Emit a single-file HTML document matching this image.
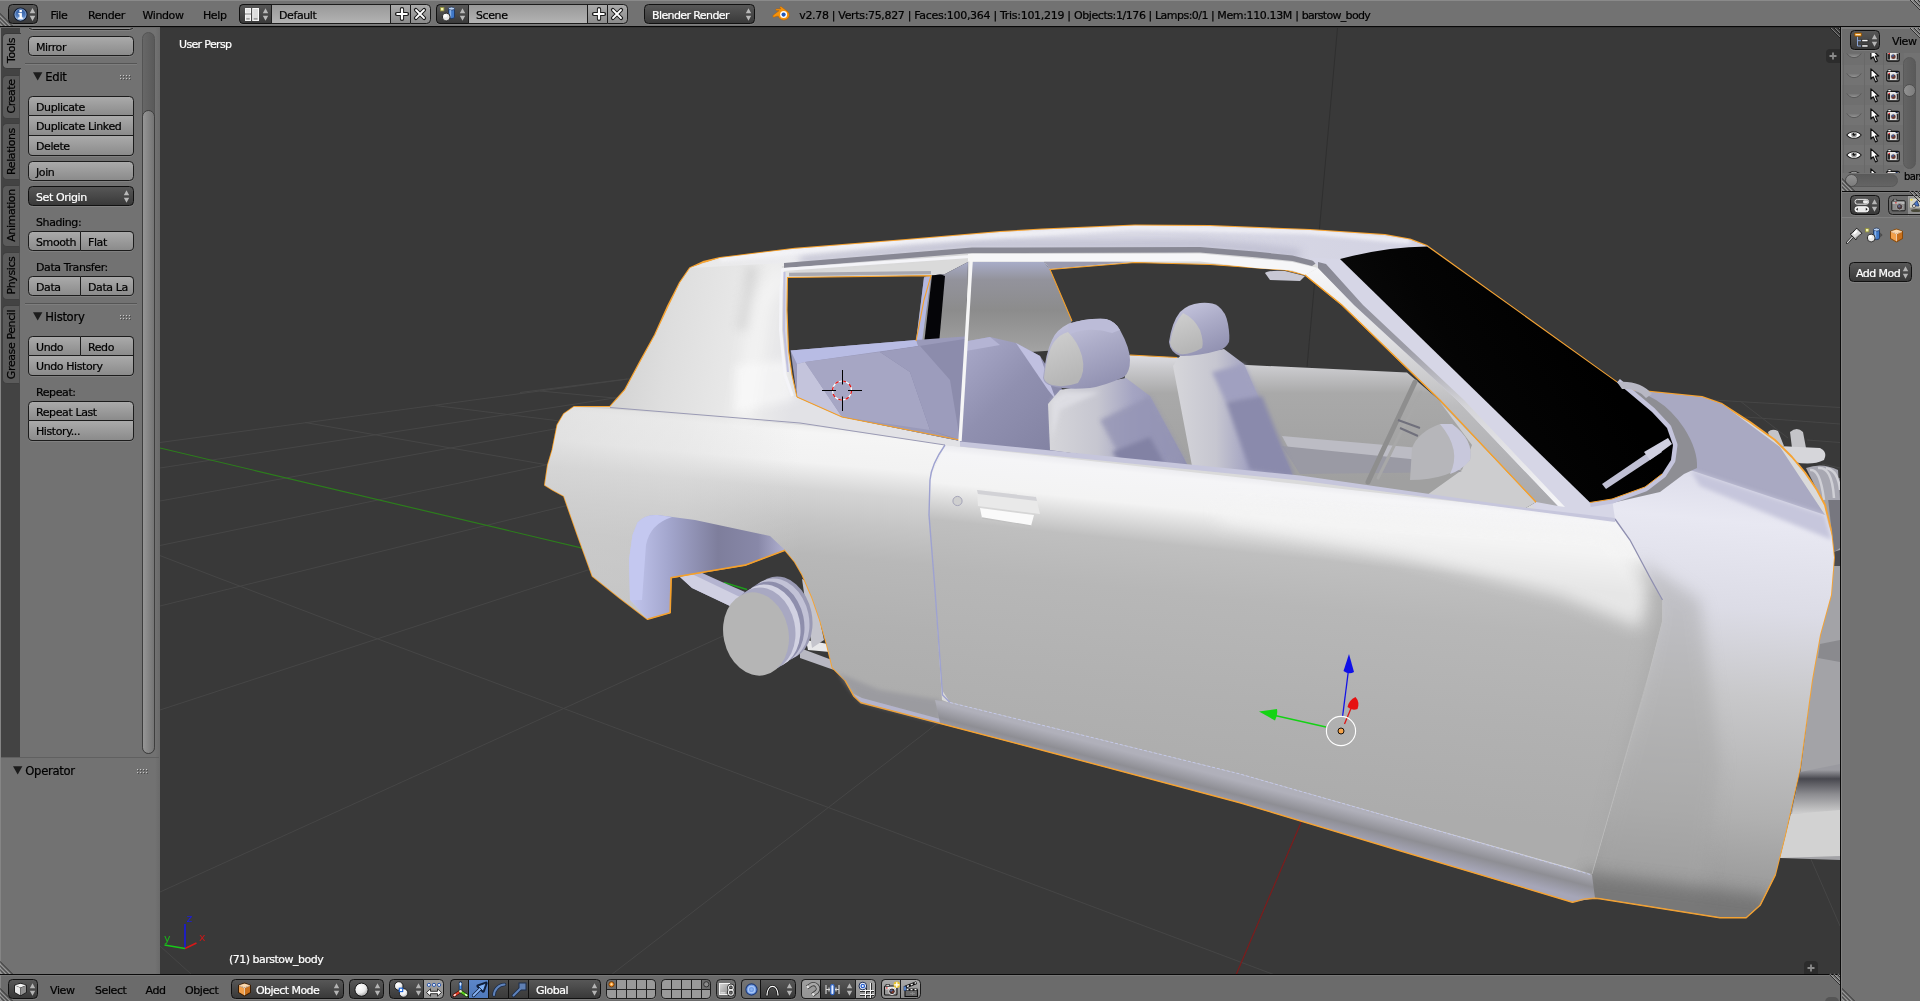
<!DOCTYPE html>
<html lang="en">
<head>
<meta charset="utf-8">
<title>Blender</title>
<style>
html,body{margin:0;padding:0}
body{width:1920px;height:1001px;overflow:hidden;position:relative;background:#727272;font-family:"DejaVu Sans","Liberation Sans",sans-serif;font-size:11px;letter-spacing:-0.4px;color:#000;line-height:13px;-webkit-text-stroke:0.22px currentColor}
#topbar,#left,#view,#bottom,#right{opacity:.999}
div,span,svg{position:absolute;box-sizing:border-box;white-space:nowrap}
svg{overflow:visible}
/* generic widgets */
.tool{border:1px solid #1c1c1c;border-radius:4.5px;background:linear-gradient(#aaaaaa,#8b8b8b);box-shadow:0 1px 0 rgba(255,255,255,.10);padding-left:7px;line-height:21px;height:20px;overflow:hidden}
.tool.top{border-radius:4.5px 4.5px 0 0;box-shadow:none}
.tool.mid{border-radius:0;border-top:none;box-shadow:none;line-height:22px;height:20px}
.tool.bot{border-radius:0 0 4.5px 4.5px;border-top:none;line-height:22px}
.tool.l{border-radius:4.5px 0 0 4.5px}
.tool.r{border-radius:0 4.5px 4.5px 0;border-left:none}
.menu{border:1px solid #111;border-radius:4.5px;background:linear-gradient(#575757,#393939);box-shadow:0 1px 0 rgba(255,255,255,.10);color:#fff;padding-left:7px;line-height:21px;height:20px}
.field{border:1px solid #1c1c1c;background:linear-gradient(#999999,#b3b3b3);line-height:21px;height:20px;padding-left:7px}
.lbl{line-height:13px}
.hline{background:#000}
.hdr-txt{line-height:13px}
</style>
</head>
<body>
<!-- ===== TOP INFO HEADER ===== -->
<div id="topbar" style="left:0;top:0;width:1920px;height:26px;background:#727272">
<!--TOPBAR-->
<div style="left:0;top:0;width:1920px;height:1px;background:#8a8a8a"></div>
<svg style="left:0;top:13px" width="13" height="13" viewBox="0 0 13 13"><g stroke="#3c3c3c" stroke-width="1"><path d="M-1 3.5 L10 14.5 M-1 7.5 L6 14.5 M-1 -0.5 L14 14.5" stroke="#2e2e2e"/></g><g stroke="#a8a8a8" stroke-width="1"><path d="M-1 2.3 L11 14.3 M-1 6.3 L7 14.3 M-1 10.3 L3 14.3"/></g></svg>
<svg style="left:1907px;top:0" width="13" height="13" viewBox="0 0 13 13"><g stroke="#2e2e2e" stroke-width="1"><path d="M2 -1 L14 11 M6 -1 L14 7 M10 -1 L14 3"/></g><g stroke="#a8a8a8" stroke-width="1"><path d="M3.2 -1 L14 9.8 M7.2 -1 L14 5.8 M11.2 -1 L14 1.8"/></g></svg>
<div class="menu" style="left:8px;top:4px;width:30px;padding:0"><svg style="left:4px;top:2px" width="15" height="15" viewBox="0 0 15 15"><defs><linearGradient id="ig" x1="0" y1="0" x2="0" y2="1"><stop offset="0" stop-color="#2c559a"/><stop offset=".55" stop-color="#4b78bb"/><stop offset="1" stop-color="#9dbbe4"/></linearGradient></defs><circle cx="7.5" cy="7.5" r="6.5" fill="url(#ig)" stroke="#0e1a30" stroke-width="1.1"/><circle cx="7.5" cy="7.5" r="5.6" fill="none" stroke="#c4d6f0" stroke-width=".6" opacity=".8"/><rect x="6.5" y="6.1" width="2.4" height="5.3" fill="#fff"/><rect x="5.3" y="6.1" width="2" height="1.2" fill="#fff"/><rect x="5.1" y="10.5" width="5.1" height="1.3" fill="#fff"/><rect x="6.4" y="2.9" width="2.5" height="2.3" fill="#fff"/></svg><svg style="left:20px;top:2px" width="7" height="15" viewBox="0 0 7 15"><path d="M3.5 1 L6.3 6.3 L0.7 6.3 Z M3.5 14 L6.3 8.7 L0.7 8.7 Z" fill="#b9b9b9"/></svg></div>
<span class="hdr-txt" style="left:50.5px;top:9px">File</span>
<span class="hdr-txt" style="left:88px;top:9px">Render</span>
<span class="hdr-txt" style="left:142.5px;top:9px">Window</span>
<span class="hdr-txt" style="left:203px;top:9px">Help</span>
<div class="menu" style="left:239px;top:4px;width:32px;padding:0;border-radius:4.5px 0 0 4.5px;border-right:none"><svg style="left:5px;top:3px" width="14" height="13" viewBox="0 0 14 13"><rect x="0.5" y="0.5" width="5" height="4.6" fill="#e6e6e6" stroke="#f8f8f8" stroke-width="1"/><rect x="0.5" y="6.9" width="5" height="5.6" fill="#e6e6e6" stroke="#f8f8f8" stroke-width="1"/><rect x="7.7" y="0.5" width="5.8" height="12" fill="#dcdcdc" stroke="#f8f8f8" stroke-width="1"/><rect x="1.3" y="10.4" width="3.4" height="1" fill="#777"/><rect x="8.7" y="10.4" width="3.8" height="1" fill="#777"/></svg><svg style="left:22px;top:2px" width="7" height="15" viewBox="0 0 7 15"><path d="M3.5 1.3 L6.2 6.2 L0.8 6.2 Z M3.5 13.7 L6.2 8.8 L0.8 8.8 Z" fill="#b9b9b9"/></svg></div><div class="field" style="left:271px;top:4px;width:119px;border-left:1px solid #1c1c1c;border-right:none;box-shadow:0 1px 0 rgba(255,255,255,.10)">Default</div><div class="tool" style="left:390px;top:4px;width:20px;border-radius:0;border-right:none;padding:0"><svg style="left:3.5px;top:2px" width="14" height="14" viewBox="0 0 14 14"><path d="M7 2 V12 M2 7 H12" stroke="#1a1a1a" stroke-width="4.2" stroke-linecap="round"/><path d="M7 2.3 V11.7 M2.3 7 H11.7" stroke="#fff" stroke-width="2.2" stroke-linecap="round"/></svg></div><div class="tool" style="left:410px;top:4px;width:21px;border-radius:0 4.5px 4.5px 0;padding:0"><svg style="left:2px;top:2px" width="14" height="14" viewBox="0 0 14 14"><path d="M2.8 2.8 L11.2 11.2 M11.2 2.8 L2.8 11.2" stroke="#1a1a1a" stroke-width="3.8" stroke-linecap="round"/><path d="M3 3 L11 11 M11 3 L3 11" stroke="#fff" stroke-width="1.8" stroke-linecap="round"/></svg></div>
<div class="menu" style="left:436px;top:4px;width:32px;padding:0;border-radius:4.5px 0 0 4.5px;border-right:none"><svg style="left:3px;top:1px" width="17" height="16" viewBox="0 0 17 16"><rect x="0.5" y="1.5" width="3.4" height="3.4" fill="#f5f5a8" stroke="#8f8f3a" stroke-width=".8"/><path d="M8.5 2.5 L8.5 11 A3 1.6 0 0 0 14.5 11 L14.5 2.5 Z" fill="#3f78c8" stroke="#1b2f55" stroke-width=".8"/><ellipse cx="11.5" cy="2.6" rx="3" ry="1.5" fill="#b7d0f3" stroke="#1b2f55" stroke-width=".7"/><rect x="9.6" y="4" width="1.6" height="7.4" fill="#9cc0f0" opacity=".8"/><circle cx="6.2" cy="11" r="3.9" fill="#e8e8e8" stroke="#1a1a1a" stroke-width=".9"/><circle cx="5.2" cy="9.8" r="1.8" fill="#fff"/><path d="M3.2 13.2 A3.9 3.9 0 0 0 9.8 12.2 A5 5 0 0 1 3.2 13.2Z" fill="#8a8a8a"/></svg><svg style="left:22px;top:2px" width="7" height="15" viewBox="0 0 7 15"><path d="M3.5 1.3 L6.2 6.2 L0.8 6.2 Z M3.5 13.7 L6.2 8.8 L0.8 8.8 Z" fill="#b9b9b9"/></svg></div><div class="field" style="left:468px;top:4px;width:119px;border-left:1px solid #1c1c1c;border-right:none;box-shadow:0 1px 0 rgba(255,255,255,.10)">Scene</div><div class="tool" style="left:587px;top:4px;width:20px;border-radius:0;border-right:none;padding:0"><svg style="left:3.5px;top:2px" width="14" height="14" viewBox="0 0 14 14"><path d="M7 2 V12 M2 7 H12" stroke="#1a1a1a" stroke-width="4.2" stroke-linecap="round"/><path d="M7 2.3 V11.7 M2.3 7 H11.7" stroke="#fff" stroke-width="2.2" stroke-linecap="round"/></svg></div><div class="tool" style="left:607px;top:4px;width:21px;border-radius:0 4.5px 4.5px 0;padding:0"><svg style="left:2px;top:2px" width="14" height="14" viewBox="0 0 14 14"><path d="M2.8 2.8 L11.2 11.2 M11.2 2.8 L2.8 11.2" stroke="#1a1a1a" stroke-width="3.8" stroke-linecap="round"/><path d="M3 3 L11 11 M11 3 L3 11" stroke="#fff" stroke-width="1.8" stroke-linecap="round"/></svg></div>
<div class="menu" style="left:644px;top:4px;width:111px;letter-spacing:-0.6px">Blender Render<svg style="left:100px;top:2px" width="7" height="15" viewBox="0 0 7 15"><path d="M3.5 1.3 L6.2 6.2 L0.8 6.2 Z M3.5 13.7 L6.2 8.8 L0.8 8.8 Z" fill="#b9b9b9"/></svg></div>
<svg style="left:772px;top:6px" width="18" height="15" viewBox="0 0 18 15"><path d="M1.2 9.2 L7.2 4.6 L4.4 4.6 A0.9 0.9 0 0 1 4.4 2.9 L9 2.9 L8 1.9 A0.9 0.9 0 0 1 9.2 0.7 L15.6 5.4 A5.6 5 0 1 1 6.3 10.2 L4.9 10.2 L2.6 11 A1 1 0 0 1 1.2 9.2 Z" fill="#f5920a" stroke="#b55e00" stroke-width=".5"/><circle cx="11.6" cy="8.6" r="3.5" fill="#fff"/><circle cx="11.6" cy="8.6" r="2.1" fill="#2359b8"/></svg>
<span class="hdr-txt" style="left:799.3px;top:9px;letter-spacing:-0.35px">v2.78 |</span>
<span class="hdr-txt" style="left:838.3px;top:9px;letter-spacing:-0.33px">Verts:75,827 |</span>
<span class="hdr-txt" style="left:914.3px;top:9px;letter-spacing:-0.3px">Faces:100,364 |</span>
<span class="hdr-txt" style="left:1000px;top:9px;letter-spacing:-0.29px">Tris:101,219 |</span>
<span class="hdr-txt" style="left:1074px;top:9px;letter-spacing:-0.42px">Objects:1/176 |</span>
<span class="hdr-txt" style="left:1155px;top:9px;letter-spacing:-0.53px">Lamps:0/1 |</span>
<span class="hdr-txt" style="left:1217.3px;top:9px;letter-spacing:-0.36px">Mem:110.13M |</span>
<span class="hdr-txt" style="left:1301.7px;top:9px;letter-spacing:-0.7px">barstow_body</span>
</div>
<div class="hline" style="left:0;top:26px;width:1920px;height:1px;background:#080808"></div>
<div class="hline" style="left:0;top:27px;width:160px;height:1px;background:#6a6a6a"></div>
<div class="hline" style="left:160px;top:27px;width:1680px;height:1px;background:#323232"></div>
<div class="hline" style="left:1842px;top:27px;width:78px;height:1px;background:#7c7c7c"></div>

<!-- ===== LEFT TOOL SHELF ===== -->
<div id="left" style="left:0;top:28px;width:160px;height:946px;background:#727272;overflow:hidden">
<!--LEFT-->
<div style="left:0;top:0;width:20px;height:730px;background:#434343"></div>
<div style="left:2px;top:5px;width:19px;height:36px;background:#727272;border:1px solid #3a3a3a;border-right:none;border-radius:5px 0 0 5px"></div>
<span style="left:11px;top:23.0px;width:0;height:0"><span style="left:-50px;top:-7px;width:100px;text-align:center;transform:rotate(-90deg);transform-origin:50% 50%;line-height:13px;height:13px">Tools</span></span>
<div style="left:2px;top:47px;width:18px;height:44px;background:#5b5b5b;border:1px solid #3f3f3f;border-right:1px solid #4a4a4a;border-radius:5px 0 0 5px"></div>
<span style="left:11px;top:69.0px;width:0;height:0"><span style="left:-50px;top:-7px;width:100px;text-align:center;transform:rotate(-90deg);transform-origin:50% 50%;line-height:13px;height:13px">Create</span></span>
<div style="left:2px;top:95px;width:18px;height:57px;background:#5b5b5b;border:1px solid #3f3f3f;border-right:1px solid #4a4a4a;border-radius:5px 0 0 5px"></div>
<span style="left:11px;top:123.5px;width:0;height:0"><span style="left:-50px;top:-7px;width:100px;text-align:center;transform:rotate(-90deg);transform-origin:50% 50%;line-height:13px;height:13px">Relations</span></span>
<div style="left:2px;top:157px;width:18px;height:62px;background:#5b5b5b;border:1px solid #3f3f3f;border-right:1px solid #4a4a4a;border-radius:5px 0 0 5px"></div>
<span style="left:11px;top:188.0px;width:0;height:0"><span style="left:-50px;top:-7px;width:100px;text-align:center;transform:rotate(-90deg);transform-origin:50% 50%;line-height:13px;height:13px">Animation</span></span>
<div style="left:2px;top:224px;width:18px;height:48px;background:#5b5b5b;border:1px solid #3f3f3f;border-right:1px solid #4a4a4a;border-radius:5px 0 0 5px"></div>
<span style="left:11px;top:248.0px;width:0;height:0"><span style="left:-50px;top:-7px;width:100px;text-align:center;transform:rotate(-90deg);transform-origin:50% 50%;line-height:13px;height:13px">Physics</span></span>
<div style="left:2px;top:277px;width:18px;height:79px;background:#5b5b5b;border:1px solid #3f3f3f;border-right:1px solid #4a4a4a;border-radius:5px 0 0 5px"></div>
<span style="left:11px;top:316.5px;width:0;height:0"><span style="left:-50px;top:-7px;width:100px;text-align:center;transform:rotate(-90deg);transform-origin:50% 50%;line-height:13px;height:13px">Grease Pencil</span></span>
<div style="left:0;top:0;width:1px;height:946px;background:#858585"></div>
<div class="tool" style="left:28px;top:-10px;width:106px;height:12px;border-radius:0 0 4.5px 4.5px;background:#8c8c8c"></div>
<div class="tool" style="left:28px;top:8px;width:106px;">Mirror</div>
<div style="left:25px;top:35px;width:112px;height:1px;background:#555"></div>
<div style="left:25px;top:36px;width:112px;height:1px;background:#7e7e7e"></div>
<svg style="left:33px;top:44px" width="10" height="9" viewBox="0 0 10 9"><path d="M0 0.2 L9.4 0.2 L4.7 8.6 Z" fill="#1c1c1c"/></svg>
<span style="left:45.3px;top:41.7px;font-size:11.6px;line-height:14px;letter-spacing:-0.3px">Edit</span>
<svg style="left:120px;top:47px" width="12" height="6" viewBox="0 0 12 6"><rect x="0" y="0" width="1" height="1" fill="#c8c8c8"/><rect x="1" y="1" width="1" height="1" fill="#4a4a4a"/><rect x="0" y="3" width="1" height="1" fill="#c8c8c8"/><rect x="1" y="4" width="1" height="1" fill="#4a4a4a"/><rect x="3" y="0" width="1" height="1" fill="#c8c8c8"/><rect x="4" y="1" width="1" height="1" fill="#4a4a4a"/><rect x="3" y="3" width="1" height="1" fill="#c8c8c8"/><rect x="4" y="4" width="1" height="1" fill="#4a4a4a"/><rect x="6" y="0" width="1" height="1" fill="#c8c8c8"/><rect x="7" y="1" width="1" height="1" fill="#4a4a4a"/><rect x="6" y="3" width="1" height="1" fill="#c8c8c8"/><rect x="7" y="4" width="1" height="1" fill="#4a4a4a"/><rect x="9" y="0" width="1" height="1" fill="#c8c8c8"/><rect x="10" y="1" width="1" height="1" fill="#4a4a4a"/><rect x="9" y="3" width="1" height="1" fill="#c8c8c8"/><rect x="10" y="4" width="1" height="1" fill="#4a4a4a"/></svg>
<div class="tool top" style="left:28px;top:68px;width:106px;">Duplicate</div>
<div class="tool mid" style="left:28px;top:88px;width:106px;">Duplicate Linked</div>
<div class="tool bot" style="left:28px;top:108px;width:106px;">Delete</div>
<div class="tool" style="left:28px;top:133px;width:106px;">Join</div>
<div class="menu" style="left:28px;top:158px;width:106px">Set Origin<svg style="left:94px;top:2px" width="7" height="15" viewBox="0 0 7 15"><path d="M3.5 1.3 L6.2 6.2 L0.8 6.2 Z M3.5 13.7 L6.2 8.8 L0.8 8.8 Z" fill="#b9b9b9"/></svg></div>
<span class="lbl" style="left:36px;top:188.0px">Shading:</span>
<div class="tool l" style="left:28px;top:203px;width:53px;">Smooth</div>
<div class="tool r" style="left:81px;top:203px;width:53px;">Flat</div>
<span class="lbl" style="left:36px;top:233.0px">Data Transfer:</span>
<div class="tool l" style="left:28px;top:248px;width:53px;">Data</div>
<div class="tool r" style="left:81px;top:248px;width:53px;">Data La</div>
<div style="left:25px;top:275px;width:112px;height:1px;background:#555"></div>
<div style="left:25px;top:276px;width:112px;height:1px;background:#7e7e7e"></div>
<svg style="left:33px;top:284px" width="10" height="9" viewBox="0 0 10 9"><path d="M0 0.2 L9.4 0.2 L4.7 8.6 Z" fill="#1c1c1c"/></svg>
<span style="left:45.3px;top:281.7px;font-size:11.6px;line-height:14px;letter-spacing:-0.3px">History</span>
<svg style="left:120px;top:287px" width="12" height="6" viewBox="0 0 12 6"><rect x="0" y="0" width="1" height="1" fill="#c8c8c8"/><rect x="1" y="1" width="1" height="1" fill="#4a4a4a"/><rect x="0" y="3" width="1" height="1" fill="#c8c8c8"/><rect x="1" y="4" width="1" height="1" fill="#4a4a4a"/><rect x="3" y="0" width="1" height="1" fill="#c8c8c8"/><rect x="4" y="1" width="1" height="1" fill="#4a4a4a"/><rect x="3" y="3" width="1" height="1" fill="#c8c8c8"/><rect x="4" y="4" width="1" height="1" fill="#4a4a4a"/><rect x="6" y="0" width="1" height="1" fill="#c8c8c8"/><rect x="7" y="1" width="1" height="1" fill="#4a4a4a"/><rect x="6" y="3" width="1" height="1" fill="#c8c8c8"/><rect x="7" y="4" width="1" height="1" fill="#4a4a4a"/><rect x="9" y="0" width="1" height="1" fill="#c8c8c8"/><rect x="10" y="1" width="1" height="1" fill="#4a4a4a"/><rect x="9" y="3" width="1" height="1" fill="#c8c8c8"/><rect x="10" y="4" width="1" height="1" fill="#4a4a4a"/></svg>
<div class="tool l" style="left:28px;top:308px;width:53px;border-radius:4.5px 0 0 0;box-shadow:none">Undo</div>
<div class="tool r" style="left:81px;top:308px;width:53px;border-radius:0 4.5px 0 0;box-shadow:none">Redo</div>
<div class="tool bot" style="left:28px;top:328px;width:106px;">Undo History</div>
<span class="lbl" style="left:36px;top:358.0px">Repeat:</span>
<div class="tool top" style="left:28px;top:373px;width:106px;">Repeat Last</div>
<div class="tool bot" style="left:28px;top:393px;width:106px;">History...</div>
<div style="left:142px;top:4px;width:13px;height:722px;border-radius:6.5px;background:linear-gradient(90deg,#676767,#5a5a5a);border:1px solid #545454"></div>
<div style="left:142px;top:82px;width:13px;height:644px;border-radius:6.5px;background:linear-gradient(90deg,#969696,#747474);border:1px solid #3e3e3e"></div>
<div style="left:155px;top:0;width:5px;height:946px;background:linear-gradient(90deg,#727272,#6a6a6a)"></div>
<div style="left:1px;top:729px;width:158px;height:1px;background:#606060"></div>
<div style="left:1px;top:730px;width:154px;height:216px;background:#727272"></div>
<svg style="left:13px;top:738px" width="10" height="9" viewBox="0 0 10 9"><path d="M0 0.2 L9.4 0.2 L4.7 8.6 Z" fill="#1c1c1c"/></svg>
<span style="left:25.3px;top:735.7px;font-size:11.6px;line-height:14px;letter-spacing:-0.3px">Operator</span>
<svg style="left:137px;top:741px" width="12" height="6" viewBox="0 0 12 6"><rect x="0" y="0" width="1" height="1" fill="#c8c8c8"/><rect x="1" y="1" width="1" height="1" fill="#4a4a4a"/><rect x="0" y="3" width="1" height="1" fill="#c8c8c8"/><rect x="1" y="4" width="1" height="1" fill="#4a4a4a"/><rect x="3" y="0" width="1" height="1" fill="#c8c8c8"/><rect x="4" y="1" width="1" height="1" fill="#4a4a4a"/><rect x="3" y="3" width="1" height="1" fill="#c8c8c8"/><rect x="4" y="4" width="1" height="1" fill="#4a4a4a"/><rect x="6" y="0" width="1" height="1" fill="#c8c8c8"/><rect x="7" y="1" width="1" height="1" fill="#4a4a4a"/><rect x="6" y="3" width="1" height="1" fill="#c8c8c8"/><rect x="7" y="4" width="1" height="1" fill="#4a4a4a"/><rect x="9" y="0" width="1" height="1" fill="#c8c8c8"/><rect x="10" y="1" width="1" height="1" fill="#4a4a4a"/><rect x="9" y="3" width="1" height="1" fill="#c8c8c8"/><rect x="10" y="4" width="1" height="1" fill="#4a4a4a"/></svg>
<svg style="left:0;top:933px" width="13" height="13" viewBox="0 0 13 13"><g stroke="#2e2e2e" stroke-width="1"><path d="M-1 3.5 L10 14.5 M-1 7.5 L6 14.5 M-1 -0.5 L14 14.5"/></g><g stroke="#a8a8a8" stroke-width="1"><path d="M-1 2.3 L11 14.3 M-1 6.3 L7 14.3 M-1 10.3 L3 14.3"/></g></svg>
</div>

<!-- ===== 3D VIEWPORT ===== -->
<div id="view" style="left:160px;top:28px;width:1680px;height:946px;background:#393939;overflow:hidden">
<!--VIEWPORT-->
<svg style="left:0;top:0" width="1680" height="946" viewBox="160 28 1680 946">
<defs>
<linearGradient id="gDoor" gradientUnits="userSpaceOnUse" x1="1230" y1="470" x2="1196" y2="790">
 <stop offset="0" stop-color="#e4e4ea"/><stop offset=".04" stop-color="#f5f5f7"/><stop offset=".135" stop-color="#f3f3f3"/><stop offset=".19" stop-color="#dadada"/><stop offset=".25" stop-color="#bfbfbf"/><stop offset=".4" stop-color="#b7b7b7"/><stop offset=".7" stop-color="#b1b1b1"/><stop offset="1" stop-color="#acacac"/>
</linearGradient>
<linearGradient id="gRear" gradientUnits="userSpaceOnUse" x1="760" y1="415" x2="735" y2="700">
 <stop offset="0" stop-color="#e6e6e6"/><stop offset=".045" stop-color="#f5f5f5"/><stop offset=".15" stop-color="#f2f2f2"/><stop offset=".245" stop-color="#d4d4d4"/><stop offset=".35" stop-color="#c5c5c5"/><stop offset=".47" stop-color="#b8b8b8"/><stop offset=".7" stop-color="#b1b1b1"/><stop offset="1" stop-color="#acacac"/>
</linearGradient>
<linearGradient id="gRearL" gradientUnits="userSpaceOnUse" x1="560" y1="0" x2="800" y2="0">
 <stop offset="0" stop-color="#d6d6d6" stop-opacity=".6"/><stop offset=".5" stop-color="#dcdcdc" stop-opacity=".45"/><stop offset="1" stop-color="#dcdcdc" stop-opacity="0"/>
</linearGradient>
<linearGradient id="gPillar" gradientUnits="userSpaceOnUse" x1="600" y1="330" x2="800" y2="360">
 <stop offset="0" stop-color="#cecece"/><stop offset=".35" stop-color="#dedede"/><stop offset=".8" stop-color="#ececec"/><stop offset="1" stop-color="#e2e2e6"/>
</linearGradient>
<linearGradient id="gRoof" gradientUnits="userSpaceOnUse" x1="690" y1="0" x2="1430" y2="0">
 <stop offset="0" stop-color="#e9e9e9"/><stop offset=".15" stop-color="#ececf0"/><stop offset=".4" stop-color="#e0e0ea"/><stop offset=".8" stop-color="#d6d6e4"/><stop offset="1" stop-color="#d2d2e2"/>
</linearGradient>
<linearGradient id="gFender" gradientUnits="userSpaceOnUse" x1="1740" y1="470" x2="1700" y2="900">
 <stop offset="0" stop-color="#dcdcea"/><stop offset=".12" stop-color="#e8e8f2"/><stop offset=".32" stop-color="#dcdce6"/><stop offset=".52" stop-color="#c8c8ca"/><stop offset=".8" stop-color="#b0b0b0"/><stop offset="1" stop-color="#969696"/>
</linearGradient>
<linearGradient id="gFenderL" gradientUnits="userSpaceOnUse" x1="1640" y1="0" x2="1760" y2="0">
 <stop offset="0" stop-color="#a8a8a8" stop-opacity=".55"/><stop offset=".5" stop-color="#b8b8b8" stop-opacity=".2"/><stop offset="1" stop-color="#c0c0c0" stop-opacity="0"/>
</linearGradient>
<linearGradient id="gSill" gradientUnits="userSpaceOnUse" x1="1100" y1="745" x2="1093" y2="772">
 <stop offset="0" stop-color="#b0b0ba"/><stop offset=".5" stop-color="#8e8e94"/><stop offset="1" stop-color="#a6a6b8"/>
</linearGradient>
<linearGradient id="gArch" gradientUnits="userSpaceOnUse" x1="630" y1="0" x2="790" y2="0">
 <stop offset="0" stop-color="#c2c6ee"/><stop offset=".25" stop-color="#a2a5cc"/><stop offset=".55" stop-color="#7e7e9c"/><stop offset=".8" stop-color="#8888a8"/><stop offset="1" stop-color="#b8b8d8"/>
</linearGradient>
<linearGradient id="gGlass" gradientUnits="userSpaceOnUse" x1="1360" y1="420" x2="1560" y2="300">
 <stop offset="0" stop-color="#0d0d0d"/><stop offset=".5" stop-color="#040404"/><stop offset="1" stop-color="#000"/>
</linearGradient>
<linearGradient id="gWall" gradientUnits="userSpaceOnUse" x1="0" y1="262" x2="0" y2="350">
 <stop offset="0" stop-color="#a8acc8"/><stop offset=".2" stop-color="#93939c"/><stop offset=".55" stop-color="#8c8c8c"/><stop offset="1" stop-color="#a2a2a2"/>
</linearGradient>
<linearGradient id="gInner" gradientUnits="userSpaceOnUse" x1="0" y1="356" x2="0" y2="480">
 <stop offset="0" stop-color="#dcdce2"/><stop offset=".1" stop-color="#c9c9cc"/><stop offset=".3" stop-color="#a9a9a9"/><stop offset="1" stop-color="#a0a0a0"/>
</linearGradient>
<linearGradient id="gSeatF" x1="0" y1="0" x2="1" y2="0">
 <stop offset="0" stop-color="#d6d6da"/><stop offset=".35" stop-color="#c6c6d0"/><stop offset=".6" stop-color="#a4a4c2"/><stop offset="1" stop-color="#8e8eae"/>
</linearGradient>
<linearGradient id="gSeatR" x1="0" y1="0" x2="1" y2="1">
 <stop offset="0" stop-color="#b0b0d0"/><stop offset=".5" stop-color="#9090b0"/><stop offset="1" stop-color="#8080a0"/>
</linearGradient>
<linearGradient id="gHead" x1="0.2" y1="0" x2="0.7" y2="1">
 <stop offset="0" stop-color="#c6c6de"/><stop offset=".45" stop-color="#acacc8"/><stop offset="1" stop-color="#9090b0"/>
</linearGradient>
<linearGradient id="gFace" x1="0" y1="0" x2="0.3" y2="1">
 <stop offset="0" stop-color="#d0d0d0"/><stop offset="1" stop-color="#b6b6b6"/>
</linearGradient>
<linearGradient id="gPA" gradientUnits="userSpaceOnUse" x1="0" y1="270" x2="0" y2="500">
 <stop offset="0" stop-color="#f6f6f8"/><stop offset=".3" stop-color="#e0e0e2"/><stop offset=".6" stop-color="#bcbcbe"/><stop offset="1" stop-color="#aaaaae"/>
</linearGradient>
<linearGradient id="gPB" gradientUnits="userSpaceOnUse" x1="0" y1="265" x2="0" y2="500">
 <stop offset="0" stop-color="#888894"/><stop offset=".35" stop-color="#9c9ca6"/><stop offset=".6" stop-color="#d4d4d8"/><stop offset="1" stop-color="#f4f4f6"/>
</linearGradient>
<linearGradient id="gBump" gradientUnits="userSpaceOnUse" x1="0" y1="770" x2="0" y2="814">
 <stop offset="0" stop-color="#9a9aa0"/><stop offset=".2" stop-color="#48484f"/><stop offset=".55" stop-color="#8c8c90"/><stop offset="1" stop-color="#d0d0d0"/>
</linearGradient>
<linearGradient id="gHub" x1="0" y1="0" x2="1" y2="0">
 <stop offset="0" stop-color="#b6b6b6"/><stop offset="1" stop-color="#b0b0b0"/>
</linearGradient>
<filter id="b2" filterUnits="userSpaceOnUse" x="160" y="28" width="1680" height="946"><feGaussianBlur stdDeviation="2"/></filter>
<filter id="b4" filterUnits="userSpaceOnUse" x="160" y="28" width="1680" height="946"><feGaussianBlur stdDeviation="4"/></filter>
<filter id="b8" filterUnits="userSpaceOnUse" x="160" y="28" width="1680" height="946"><feGaussianBlur stdDeviation="8"/></filter>
<clipPath id="cBody"><path d="M574,407 L610,407 L625,390 L640,362 L655,335 L668,306 L680,282.5 L690,268 L703,262 L720,258 L795,248.75 L906,240 L1000,232 L1042,229.5 L1135,225.5 L1210,226 L1310,230 L1385,235 L1410,239.5 L1427,246 L1429,247.5 L1617,382.5 L1622,389 L1702,397 L1722,404 L1750,422 L1775,440 L1792,457 L1805,472.5 L1817,490 L1825,505 L1831,530 L1834,557.5 L1831,595 L1820,635 L1812,680 L1800,767.5 L1785,835 L1775,875 L1760,905 L1746,917.5 L1720,917.5 L1600,898.5 L1595,898 L1584,899 L1572.5,902 L1400,850.5 L1240,802.5 L1050,752 L861,702.5 L854,696 L849,687 L845,680 L838,673 L832.5,667.5 L827,645 L820,620 L812,597 L802.5,575 L795,562 L785,550 L745,565 L708,571 L671,577.5 L670,612.5 L647.5,619 L620,598 L592.5,576 L578,536 L564,496 L553,490 L545,485 L548,465 L552.5,450 L557.5,425 L564,414 Z"/></clipPath>
<clipPath id="cWinF"><path d="M1050,269.5 L1135,262.5 L1210,264.5 L1285,270 L1305,275 L1342,305 L1440,400 L1536,502 L1524,509 L1300,477 L960,443 L963,400 L966,340 L970,285 L972,262 L1044,262 Z"/></clipPath>
<clipPath id="cWinR"><path d="M787.5,277.5 L931,275.6 L945,274 L968,262 L966,330 L960,441 L842,417 L797,397 L792,375 L788.5,350 L787,310 Z"/></clipPath>
</defs>
<line x1="160" y1="442.5" x2="630" y2="378.75" stroke="#464646" stroke-width="1"/>
<line x1="160" y1="468" x2="617.5" y2="397.5" stroke="#464646" stroke-width="1"/>
<line x1="160" y1="501" x2="560" y2="428" stroke="#464646" stroke-width="1"/>
<line x1="160" y1="545.5" x2="548" y2="464.5" stroke="#464646" stroke-width="1"/>
<line x1="160" y1="606" x2="575" y2="503.5" stroke="#464646" stroke-width="1"/>
<line x1="160" y1="710" x2="600" y2="566" stroke="#464646" stroke-width="1"/>
<line x1="160" y1="892" x2="727.5" y2="634" stroke="#464646" stroke-width="1"/>
<line x1="611" y1="975" x2="960" y2="706" stroke="#464646" stroke-width="1"/>
<line x1="305" y1="422.5" x2="548" y2="465" stroke="#464646" stroke-width="1"/>
<line x1="435" y1="405.5" x2="560" y2="421" stroke="#464646" stroke-width="1"/>
<line x1="540" y1="391" x2="625" y2="399" stroke="#464646" stroke-width="1"/>
<line x1="160" y1="555.6" x2="379" y2="639.4" stroke="#464646" stroke-width="1"/>
<line x1="379" y1="639.4" x2="827" y2="807" stroke="#464646" stroke-width="1"/>
<line x1="827" y1="807" x2="1155" y2="930" stroke="#464646" stroke-width="1"/>
<line x1="1155" y1="930" x2="1275" y2="975" stroke="#464646" stroke-width="1"/>
<line x1="160" y1="946" x2="191" y2="974" stroke="#464646" stroke-width="1"/>
<line x1="1712" y1="400" x2="1840" y2="407.5" stroke="#464646" stroke-width="1"/>
<line x1="1745" y1="417" x2="1840" y2="424" stroke="#464646" stroke-width="1"/>
<line x1="1740" y1="401" x2="1788" y2="438" stroke="#464646" stroke-width="1"/>
<line x1="1807" y1="440" x2="1840" y2="442.5" stroke="#464646" stroke-width="1"/>
<line x1="1822" y1="464" x2="1840" y2="468" stroke="#464646" stroke-width="1"/>
<line x1="1810" y1="857" x2="1840" y2="926" stroke="#464646" stroke-width="1"/>
<line x1="520" y1="392.5" x2="627" y2="379" stroke="#464646" stroke-width="1"/>
<line x1="1337.5" y1="28" x2="1307" y2="367" stroke="#2f2f2f" stroke-width="1"/>
<line x1="160" y1="448" x2="600" y2="552.3" stroke="#2c7d1c" stroke-width="1.2"/>
<line x1="724" y1="582.5" x2="747" y2="589.5" stroke="#1f9d1c" stroke-width="1.4"/>
<line x1="1301" y1="822.5" x2="1236" y2="975" stroke="#7d1c1c" stroke-width="1.2"/>
<path d="M1790,500 L1840,500 L1840,860 L1780,858 L1800,775 L1812,680 L1820,635 L1831,595 L1834,557 Z" fill="#a3a3a7"/>
<path d="M1833,552 L1840,550 L1840,566 L1834,566 Z" fill="#4a4a50"/>
<path d="M1820,644 L1840,640 L1840,662 L1818,658 Z" fill="#8a8a8e"/>
<path d="M1800,772 L1840,764 L1840,812 L1792,814 Z" fill="url(#gBump)"/>
<path d="M1791,814 L1840,810 L1840,856 L1780,858 Z" fill="#d2d2d2"/>
<path d="M1826,480 L1840,478 L1840,548 L1834,552 Z" fill="#77777f"/>
<path d="M1768,432 Q1772,428 1778,431 L1784,446 L1772,446 Z M1790,432 Q1797,426 1803,432 L1806,448 L1792,448 Z" fill="#c4c4c8"/>
<path d="M1776,446 L1820,448 Q1828,452 1824,460 Q1812,466 1794,462 L1780,455 Z" fill="#d6d6da"/>
<path d="M1806,468 Q1822,462 1838,470 L1840,500 L1822,500 Z" fill="#a8a8b2"/>
<path d="M1810,470 Q1820,468 1824,500 M1818,468 Q1832,466 1834,498 M1826,468 Q1838,470 1840,490" stroke="#d0d0d6" stroke-width="2.5" fill="none"/>
<path d="M680,577 L700,572 L722,582 L745,592 L730,606 L692,588 Z" fill="#b4b4d0"/>
<path d="M680,577 L692,574 L740,597 L730,606 L692,588 Z" fill="#d0d0e2"/>
<path d="M800,648 L832,660 L834,670 L800,658 Z" fill="#b8b8c2"/>
<path d="M806,640 L828,644 L830,652 L808,650 Z" fill="#e8e8ea"/>
<path d="M802,579 L812,584 L824,640 L812,648 Z" fill="#c4c4cc"/>
<ellipse cx="781" cy="618" rx="31" ry="42" transform="rotate(-12 781 618)" fill="#9a9ab4"/>
<ellipse cx="777" cy="620" rx="32" ry="42" transform="rotate(-12 777 620)" fill="#c2c2d6"/>
<ellipse cx="772" cy="623" rx="32" ry="42" transform="rotate(-12 772 623)" fill="#8e8eac"/>
<ellipse cx="768" cy="626" rx="32" ry="42" transform="rotate(-12 768 626)" fill="#d2d2e2"/>
<ellipse cx="763" cy="629" rx="32" ry="42" transform="rotate(-12 763 629)" fill="#a8a8c2"/>
<ellipse cx="756" cy="634" rx="32.5" ry="42" transform="rotate(-12 756 634)" fill="#b5b5b5"/>
<path d="M574,407 L610,407 L625,390 L640,362 L655,335 L668,306 L680,282.5 L690,268 L703,262 L720,258 L795,248.75 L906,240 L1000,232 L1042,229.5 L1135,225.5 L1210,226 L1310,230 L1385,235 L1410,239.5 L1427,246 L1429,247.5 L1617,382.5 L1622,389 L1702,397 L1722,404 L1750,422 L1775,440 L1792,457 L1805,472.5 L1817,490 L1825,505 L1831,530 L1834,557.5 L1831,595 L1820,635 L1812,680 L1800,767.5 L1785,835 L1775,875 L1760,905 L1746,917.5 L1720,917.5 L1600,898.5 L1595,898 L1584,899 L1572.5,902 L1400,850.5 L1240,802.5 L1050,752 L861,702.5 L854,696 L849,687 L845,680 L838,673 L832.5,667.5 L827,645 L820,620 L812,597 L802.5,575 L795,562 L785,550 L745,565 L708,571 L671,577.5 L670,612.5 L647.5,619 L620,598 L592.5,576 L578,536 L564,496 L553,490 L545,485 L548,465 L552.5,450 L557.5,425 L564,414 Z" fill="#dadada" stroke="#f5a333" stroke-width="1.9" stroke-linejoin="round"/>
<g clip-path="url(#cBody)">
<path d="M540,400 L960,440 L945,445 L930,477 L929,515 L935,590 L942,700 L952,704 L945,730 L540,730 Z" fill="url(#gRear)"/>
<path d="M540,400 L800,400 L800,702 L540,702 Z" fill="url(#gRearL)"/>
<path d="M945,445 L1615,519 L1630,540 L1650,577 L1662,600 L1662,622 L1650,670 L1645,690 L1592,874 L1240,774 L950,702.5 L942,690 L935,590 L929,515 L930,477 Z" fill="url(#gDoor)"/>
<path d="M1220,505 L1612,530 L1650,590 L1640,628 L1560,596 L1400,556 L1220,522 Z" fill="#f4f4f4" opacity=".75" filter="url(#b8)"/>
<path d="M1615,519 L1590,502 L1612,499 L1652,482 L1672,460 L1690,470 L1825,515 L1840,560 L1840,930 L1560,930 L1592,874 L1645,690 L1662,622 L1662,600 L1650,577 L1630,540 Z" fill="url(#gFender)"/>
<path d="M1585,900 L1640,690 L1655,610 L1640,560 L1700,600 L1720,760 L1700,930 L1560,930 Z" fill="#a4a4a4" opacity=".5" filter="url(#b8)"/>
<path d="M1585,872 L1770,896 L1770,945 L1560,945 Z" fill="#6c6c6c" opacity=".75" filter="url(#b8)"/>
<path d="M1617,382 L1622,389 L1702,397 L1722,404 L1780,447 L1825,515 L1690,470 L1672,460 L1672,440 L1660,420 Z" fill="#a9a9c2"/>
<path d="M1690,470 L1825,515 L1832,540 L1700,486 Z" fill="#c6c6dc" filter="url(#b2)"/>
<path d="M574,407 L610,407 L625,390 L655,335 L680,282.5 L690,268 L720,258 L795,248.75 L800,266 L782,266 L780,310 L785,375 L792.5,396 L797,397 L842,417 L960,441 L960,447 L800,424 L610,409 Z" fill="url(#gPillar)"/>
<path d="M752,266 L748,300 L742,330" stroke="#c2c2c2" stroke-width="13" fill="none" filter="url(#b4)" opacity=".4"/>
<path d="M735,365 L788,360 L795,400 L735,412 Z" fill="#fafafa" opacity=".6" filter="url(#b4)"/>
<path d="M742,420 L760,300 L790,270" stroke="#ffffff" stroke-opacity=".5" stroke-width="14" fill="none" filter="url(#b8)"/>
<path d="M690,268 L720,258 L795,248.75 L906,240 L1000,232 L1042,229.5 L1135,225.5 L1210,226 L1310,230 L1385,235 L1410,239.5 L1427,246 L1380,252 L1340,259 L1315,262 L1292.5,256 L1255,252 L1200,247.5 L972,248 L784,263 Z" fill="url(#gRoof)"/>
<path d="M800,260 L972,244.5 L1200,244 L1255,248.5 L1300,254" fill="none" stroke="#b4b4c8" stroke-width="8" filter="url(#b4)" opacity=".8"/>
<path d="M720,259 L906,241 L1135,227 L1310,231.5 L1410,241" fill="none" stroke="#f6f6fa" stroke-width="5" filter="url(#b2)" opacity=".9"/>
<path d="M784,263 L972,247.5 L1200,247 L1255,251.6 L1292.5,255.5 L1318,262 L1312,266 L1292.5,261 L1255,257.2 L1200,252.5 L972,253 L784,268 Z" fill="#888894"/>
<path d="M1310,257.5 L1340,259 L1385,247.5 L1427,246 L1429,247.5 L1400,317.5 L1590,502 L1612,499 L1615,519 L1536,510 Z" fill="#d6d6e6"/>
</g>
<path d="M1050,269.5 L1135,262.5 L1210,264.5 L1285,270 L1305,275 L1342,305 L1440,400 L1536,502 L1524,509 L1300,477 L960,443 L963,400 L966,340 L970,285 L972,262 L1044,262 Z" fill="#393939"/>
<g clip-path="url(#cWinF)">
<line x1="1322" y1="200" x2="1307" y2="367" stroke="#2f2f2f" stroke-width="1"/>
<path d="M960,255 L1044,261 L1050,269.5 L1072,321 L1060,350 L1030,352 L960,350 Z" fill="url(#gWall)"/>
<path d="M1126,355 L1177,357.5 L1247,365 L1407,372.5 L1445,405 L1540,505 L1540,515 L1300,487 L1120,465 Z" fill="url(#gInner)"/>
<path d="M1440,402 L1540,506 L1540,515 L1420,500 L1462,470 L1472,445 Z" fill="#cdcdcf"/>
<path d="M1282,436 L1420,448 L1462,470 L1300,470 Z" fill="#bcbcc4"/>
<path d="M1282,446 L1440,462 L1462,472 L1300,474 Z" fill="#9a9aa4"/>
<path d="M1412,448 Q1418,432 1440,424 L1452,424 Q1474,440 1470,460 Q1450,480 1410,480 Z" fill="#b6b6ba"/>
<path d="M1440,424 L1452,424 Q1474,440 1470,460 Q1462,470 1450,474 Q1462,450 1440,424Z" fill="#c8c8dc"/>
<path d="M1415,382 L1368,482" stroke="#8e8e8e" stroke-width="5" stroke-linecap="round"/>
<path d="M1421,392 L1378,478" stroke="#a8a8a8" stroke-width="3" stroke-linecap="round"/>
<path d="M1398,420 L1420,428 M1400,428 L1418,436" stroke="#70707c" stroke-width="2"/>
<path d="M940,346 L990,337 L1016,343 L1040,356 L1064,392 L1066,458 L940,446 Z" fill="url(#gSeatR)"/>
<path d="M940,346 L990,337 L1000,345 L960,352 Z" fill="#b4b4d4"/>
<path d="M1016,343 L1048,390 L1056,400 L1040,356 Z" fill="#c0c0e0"/>
<path d="M1048,404 L1060,390 L1126,378 L1150,396 L1186,462 L1190,470 L1050,450 Z" fill="url(#gSeatF)"/>
<path d="M1100,420 L1150,396 L1186,462 L1120,456 Z" fill="#9494b4" opacity=".8" filter="url(#b2)"/>
<path d="M1112,452 L1150,437 L1166,466 L1120,462 Z" fill="#8282a4" filter="url(#b2)"/>
<path d="M1052,400 L1064,392 L1100,392 L1060,410 L1052,440 Z" fill="#e2e2e8" opacity=".7" filter="url(#b2)"/>
<path d="M1043,378 Q1046,352 1052,340 Q1056,330 1068,324 Q1086,318 1106,319 Q1116,322 1120,330 Q1130,348 1130,360 Q1130,372 1124,377 Q1104,386 1090,388 Q1066,390 1052,386 Q1044,384 1043,378Z" fill="url(#gHead)"/>
<path d="M1044,378 Q1047,352 1054,342 Q1060,334 1068,332 Q1078,342 1082,356 Q1086,372 1078,383 Q1064,388 1052,385 Q1045,383 1044,378Z" fill="url(#gFace)"/>
<path d="M1068,324 Q1086,318 1106,319 Q1116,322 1120,330 L1112,333 Q1090,326 1070,334 Z" fill="#bcbcd8"/>
<path d="M1173,366 L1180,356 L1224,349 L1244,364 L1292,474 L1296,480 L1192,466 Z" fill="url(#gSeatF)"/>
<path d="M1212,372 L1244,364 L1262,404 L1226,402 Z" fill="#a0a0c0" filter="url(#b2)"/>
<path d="M1226,402 L1262,396 L1294,476 L1250,470 Z" fill="#8a8aac" filter="url(#b2)"/>
<path d="M1169,342 Q1172,322 1180,312 Q1188,304 1200,303 Q1212,302 1218,306 Q1226,312 1228,324 Q1230,336 1229,342 Q1226,348 1220,350 Q1200,356 1180,356 Q1170,352 1169,342Z" fill="url(#gHead)"/>
<path d="M1170,343 Q1173,324 1183,313 Q1194,318 1200,330 Q1204,342 1202,348 Q1190,355 1180,354 Q1171,350 1170,343Z" fill="url(#gFace)"/>
<path d="M1265,273 Q1268,270 1285,271 L1305,276 L1300,281 L1270,280 Z" fill="#c8c8d4"/>
</g>
<path d="M1044,261.5 L1135,261.5 L1050,269 Z" fill="#9a9aae"/>
<path d="M789,274.5 L931,272.6" fill="none" stroke="#a8a8b0" stroke-width="3.4"/>
<path d="M1072,321 L1050,269.5 L1135,262.5 L1210,264.5 L1285,270 L1305,275 L1342,305 L1440,400 L1536,502" fill="none" stroke="#f5a02a" stroke-width="1.1"/>
<path d="M1130,355 L1177,357.5" stroke="#f5a02a" stroke-width="1.1"/>
<path d="M787.5,277.5 L931,275.6 L945,274 L968,262 L966,330 L960,441 L842,417 L797,397 L792,375 L788.5,350 L787,310 Z" fill="#393939"/>
<g clip-path="url(#cWinR)">
<path d="M924,277 L972,255 L972,360 L916,345 Z" fill="url(#gWall)"/>
<path d="M932.5,271 L945,276 L939,344 L924,344 Z" fill="#050508"/>
<path d="M924,277.5 L931,276 L922,342 L916,341 Z" fill="#b4b8e0"/>
<path d="M790.6,350.6 L916,340 L972,336 L972,445 L842,417 L797,397 Z" fill="#9a9aba"/>
<path d="M790.6,350.6 L916,340 L918,346 L805,362 L797,364 Z" fill="#b8bce4"/>
<path d="M797,364 L805,362 L842,417 L797,397 Z" fill="#c4c4dc"/>
<path d="M805,362 L880,352 L910,372 L930,430 L842,417 Z" fill="#a6a6c4"/>
<path d="M880,352 L972,338 L972,445 L930,430 L910,372 Z" fill="#8c8cac"/>
<path d="M880,352 L920,346 L950,380 L960,440 L930,430 L910,372 Z" fill="#9c9cbc"/>
</g>
<path d="M797,397 L792,375 L788.5,350 L787,310 L787.5,277.5 L931,275.6 L924,300 L916,341" fill="none" stroke="#f5a02a" stroke-width="1.1"/>
<path d="M797,397 L842,417 L960,440" fill="none" stroke="#f5a02a" stroke-width="1.1"/>
<path d="M792.5,396 L785,375 L780.5,330 L781,290 L782.5,269.5 L970,256.5" fill="none" stroke="#f4f4f8" stroke-width="3" stroke-linejoin="round"/>
<path d="M968,254 L1200,253.5 L1255,258.4 L1292.5,262 L1318,268 L1305,275 L1292.5,270.5 L1255,268 L1200,261.5 L968,261.5 Z" fill="#f6f6f8"/>
<path d="M784.5,272 L784,330 L788,372" fill="none" stroke="#c0c0e0" stroke-width="2"/>
<path d="M971.5,255 L960,441" stroke="#f6f6f6" stroke-width="3.4"/>
<path d="M1305,275 L1342,305 L1440,400 L1536,502 L1558,506 L1457,400 L1354,305 L1318,268 Z" fill="url(#gPA)"/>
<path d="M1318,268 L1354,305 L1457,400 L1558,506 L1565,507 L1464,400 L1363,305 L1326,264 L1318,262 Z" fill="url(#gPB)"/>
<path d="M1305,275 L1342,305 L1440,400 L1536,502" fill="none" stroke="#f5a02a" stroke-width="1.2"/>
<path d="M1622,389 Q1660,392 1684,428 Q1698,450 1697,468 L1684,474 L1660,492 L1612,503 L1660,470 L1668,440 L1640,400 Z" fill="#8e8e94"/>
<path d="M1617,382.5 L1652,412 L1667,428 L1673,445 L1671,460 L1662,474 L1645,487 L1612,499 L1590,502.5" fill="none" stroke="#c4c4dc" stroke-width="9" stroke-linejoin="round"/>
<path d="M1340,259 Q1385,247 1427,246.5 L1617,382.5 L1652,412 L1667,428 L1673,445 L1671,460 L1662,474 L1645,487 L1612,499 L1590,502.5 L1400,317.5 Z" fill="url(#gGlass)"/>
<path d="M1590,502.5 L1612,499 L1645,487 L1662,474" fill="none" stroke="#f5a02a" stroke-width="1"/>
<path d="M1602,484 L1658,446 L1662,452 L1606,489 Z" fill="#c0c0d4"/>
<path d="M1644,452 L1668,438 L1672,444 L1650,460 Z" fill="#d0d0e0"/>
<path d="M1617,382 Q1640,380 1652,394 L1646,398 Q1638,388 1622,389 Z" fill="#b8b8c4"/>
<path d="M945,445 Q931,465 930,480 L929,515 L935,590 L942.5,695 L950,702.5" fill="none" stroke="#9ea2d0" stroke-width="1.4"/>
<path d="M1615,519 L1630,540 L1650,577.5 L1662.5,600" fill="none" stroke="#8f8fb0" stroke-width="1.3"/>
<path d="M1662.5,600 L1662.5,622 L1650,670 L1592,874" fill="none" stroke="#c2c2c2" stroke-width="1" opacity=".6"/>
<path d="M960,441.5 L1300,475.5 L1524,507.5 L1615,518 L1615,522 L1300,480.5 L960,446.5 Z" fill="#c6c6dc"/>
<path d="M610,407.5 L800,423 L945,445" fill="none" stroke="#9a9ab4" stroke-width="1"/>
<path d="M977,490 L1036,497 L1040,514 L978,506 Z" fill="#e9e9e9"/>
<path d="M977,490 L1036,497 L1037,501 L978,494 Z" fill="#d2d2d6"/>
<path d="M980,508 L1034,515 L1031,526 L982,518 Z" fill="#fafafa"/>
<path d="M982,518 L1031,526" stroke="#c0c0c0" stroke-width="1.4"/>
<circle cx="957.5" cy="501" r="4.6" fill="#cfcfcf" stroke="#a4a4b8" stroke-width="1"/>
<path d="M838,673 L850,690 L861,702.5 L940,723 L940,700 L880,690 Z" fill="#8e8e96" opacity=".55" filter="url(#b2)"/>
<path d="M852,693 L861,702.5 L940,723 L940,719 L862,698 Z" fill="#b4b4cc"/>
<path d="M935,700 L940,723 L1050,752 L1240,802.5 L1400,850.5 L1572.5,902 L1595,898 L1592,875 L1240,774 L950,702.5 Z" fill="url(#gSill)"/>
<path d="M950,702.5 L1240,774 L1592,875" fill="none" stroke="#c4c8e8" stroke-width="1" stroke-dasharray="3 2"/>
<path d="M845,680 L854,696 L861,702.5 L1050,752 L1240,802.5 L1400,850.5 L1572.5,902 L1584,899 L1595,898 L1600,898.5 L1720,917.5 L1746,917.5 L1760,905 L1775,875" fill="none" stroke="#f5a333" stroke-width="1"/>
<path d="M637.5,522.5 Q645,514 657.5,515 L695,520 L770,536 L785,550 L745,565 L671,577.5 L670,612.5 L647.5,619 L630,600 L629,560 L632.5,535 Z" fill="url(#gArch)"/>
<path d="M785,550 L745,565 L671,577.5 L670,612.5 L647.5,619" fill="none" stroke="#f5a02a" stroke-width="1.3"/>
<path d="M637.5,522.5 Q645,514 657.5,515 L672,517 Q650,524 646,545 L642,600 L630,600 L629,560 L632.5,535 Z" fill="#c4c8f0"/>
<g fill="none"><circle cx="842" cy="390.5" r="9.5" stroke="#fff" stroke-width="1.2"/><circle cx="842" cy="390.5" r="9.5" stroke="#e01010" stroke-width="1.2" stroke-dasharray="3.7 3.76"/><path d="M822,390.5 H836 M848,390.5 H862 M842.5,370 V384.5 M842.5,396.5 V411" stroke="#000" stroke-width="1"/></g>
<line x1="1342.5" y1="717" x2="1348.5" y2="670" stroke="#1414e6" stroke-width="1.3"/>
<path d="M1349,654 L1354,672 Q1349,675 1343.5,671 Z" fill="#1010e8"/>
<line x1="1326" y1="727" x2="1275" y2="715.5" stroke="#14d214" stroke-width="1.3"/>
<path d="M1259,711.5 L1277,709 Q1278,715 1275,720.5 Z" fill="#14d414"/>
<line x1="1344.5" y1="724" x2="1352" y2="706" stroke="#e01414" stroke-width="1.3"/>
<path d="M1355.5,697 Q1360,702 1357.5,709 Q1352,711 1347.5,707 Q1349,700 1355.5,697Z" fill="#e61010"/>
<circle cx="1341" cy="731" r="14.6" fill="none" stroke="#fff" stroke-width="1.1"/>
<circle cx="1341" cy="731" r="3" fill="#f5a34a" stroke="#000" stroke-width=".9"/>
<path d="M185,948 L185,924" stroke="#1818e0" stroke-width="1.6"/><path d="M185,948.5 L196.5,943" stroke="#d81818" stroke-width="1.6"/><path d="M185,948.5 L164.5,945" stroke="#18c818" stroke-width="1.6"/>
<text x="186.5" y="922" font-size="11" fill="#1c1ce0" font-family="DejaVu Sans, Liberation Sans, sans-serif">z</text>
<text x="199" y="941" font-size="11" fill="#c81818" font-family="DejaVu Sans, Liberation Sans, sans-serif">x</text>
<text x="164" y="942" font-size="11" fill="#18b818" font-family="DejaVu Sans, Liberation Sans, sans-serif">y</text>
</svg>
<span style="left:19px;top:10px;color:#fff;letter-spacing:-0.65px">User Persp</span>
<span style="left:69px;top:925px;color:#fff;letter-spacing:-0.5px">(71) barstow_body</span>
<div style="left:1666px;top:21px;width:14px;height:14px;background:#2c2c2c;border-radius:4px 0 0 4px"></div><svg style="left:1669px;top:24px" width="8" height="8" viewBox="0 0 8 8"><path d="M4 0.5 V7.5 M0.5 4 H7.5" stroke="#8a8a8a" stroke-width="1.8"/></svg>
<div style="left:1644px;top:933px;width:14px;height:13px;background:#2c2c2c;border-radius:4px 4px 0 0"></div><svg style="left:1647px;top:936px" width="8" height="8" viewBox="0 0 8 8"><path d="M4 0.5 V7.5 M0.5 4 H7.5" stroke="#8a8a8a" stroke-width="1.8"/></svg>
<svg style="left:1667px;top:0" width="13" height="13" viewBox="0 0 13 13"><g stroke="#1e1e1e" stroke-width="1"><path d="M2 -1 L14 11 M6 -1 L14 7 M10 -1 L14 3"/></g><g stroke="#8a8a8a" stroke-width="1"><path d="M3.2 -1 L14 9.8 M7.2 -1 L14 5.8 M11.2 -1 L14 1.8"/></g></svg>
</div>

<!-- ===== BOTTOM 3D HEADER ===== -->
<div class="hline" style="left:0;top:974px;width:1841px;height:1px;background:#0a0a0a"></div>
<div id="bottom" style="left:0;top:975px;width:1840px;height:26px;background:#6b6b6b">
<!--BOTTOM-->
<div style="left:0;top:0;width:1840px;height:1px;background:#787878"></div>
<div style="left:0;top:0;width:1px;height:26px;background:#858585"></div>
<svg style="left:0;top:13px" width="13" height="13" viewBox="0 0 13 13"><g stroke="#2e2e2e" stroke-width="1"><path d="M-1 3.5 L10 14.5 M-1 7.5 L6 14.5 M-1 -0.5 L14 14.5"/></g><g stroke="#a8a8a8" stroke-width="1"><path d="M-1 2.3 L11 14.3 M-1 6.3 L7 14.3 M-1 10.3 L3 14.3"/></g></svg>
<svg style="left:1827px;top:0" width="13" height="13" viewBox="0 0 13 13"><g stroke="#2e2e2e" stroke-width="1"><path d="M2 -1 L14 11 M6 -1 L14 7 M10 -1 L14 3"/></g><g stroke="#a8a8a8" stroke-width="1"><path d="M3.2 -1 L14 9.8 M7.2 -1 L14 5.8 M11.2 -1 L14 1.8"/></g></svg>
<div class="menu" style="left:8px;top:4px;width:30px;padding:0"><svg style="left:4px;top:2px" width="15" height="15" viewBox="0 0 15 15"><path d="M7.5 0.8 L13.8 3 L13.8 10.6 L7.5 14.2 L1.2 10.6 L1.2 3 Z" fill="#1a1a1a"/><path d="M2 3.2 L7.5 1.7 L13 3.2 L7.5 5.4 Z" fill="#f4f4f4"/><path d="M2 3.6 L7.3 5.8 L7.3 13.2 L2 10.2 Z" fill="#e9e9e9"/><path d="M13 3.6 L7.8 5.8 L7.8 13.2 L13 10.2 Z" fill="#8e8e8e"/></svg><svg style="left:20px;top:2px" width="7" height="15" viewBox="0 0 7 15"><path d="M3.5 1.3 L6.2 6.2 L0.8 6.2 Z M3.5 13.7 L6.2 8.8 L0.8 8.8 Z" fill="#b4b4b4"/></svg></div>
<span class="hdr-txt" style="left:50px;top:9px">View</span>
<span class="hdr-txt" style="left:95px;top:9px">Select</span>
<span class="hdr-txt" style="left:145.5px;top:9px">Add</span>
<span class="hdr-txt" style="left:185px;top:9px">Object</span>
<div class="menu" style="left:231px;top:4px;width:113px;padding-left:24px;letter-spacing:-0.55px">Object Mode<svg style="left:5px;top:2px" width="15" height="15" viewBox="0 0 15 15"><path d="M7.5 0.6 L14 3 L14 10.8 L7.5 14.4 L1 10.8 L1 3 Z" fill="#3a1c02"/><path d="M2 3.3 L7.5 1.6 L13 3.3 L7.5 5.6 Z" fill="#fbd9ad"/><path d="M2 4 L7.2 6.2 L7.2 13.2 L2 10.2 Z" fill="#f2a04a"/><path d="M13 4 L7.8 6.2 L7.8 13.2 L13 10.2 Z" fill="#c8701c"/><path d="M2 3.6 L7.5 5.9 L13 3.6 M7.5 5.9 L7.5 13.3" stroke="#ffe9cf" stroke-width=".8" fill="none"/></svg><svg style="left:101px;top:2px" width="7" height="15" viewBox="0 0 7 15"><path d="M3.5 1.3 L6.2 6.2 L0.8 6.2 Z M3.5 13.7 L6.2 8.8 L0.8 8.8 Z" fill="#b4b4b4"/></svg></div>
<div class="menu" style="left:349px;top:4px;width:35px;padding:0"><svg style="left:4px;top:2px" width="15" height="15" viewBox="0 0 15 15"><defs><radialGradient id="sph" cx=".38" cy=".32" r=".75"><stop offset="0" stop-color="#fff"/><stop offset=".55" stop-color="#ececec"/><stop offset="1" stop-color="#9a9a9a"/></radialGradient></defs><circle cx="7.5" cy="7.7" r="6.6" fill="url(#sph)" stroke="#151515" stroke-width="1"/></svg><svg style="left:24px;top:2px" width="7" height="15" viewBox="0 0 7 15"><path d="M3.5 1.3 L6.2 6.2 L0.8 6.2 Z M3.5 13.7 L6.2 8.8 L0.8 8.8 Z" fill="#b4b4b4"/></svg></div>
<div class="menu" style="left:389px;top:4px;width:35px;padding:0;border-radius:4.5px 0 0 4.5px"><svg style="left:3px;top:1px" width="17" height="17" viewBox="0 0 17 17"><circle cx="5.8" cy="5" r="4.3" fill="url(#sph)" stroke="#151515" stroke-width=".9"/><circle cx="10.6" cy="12" r="4.3" fill="url(#sph)" stroke="#151515" stroke-width=".9"/><rect x="6.3" y="7.2" width="3.4" height="3.4" fill="#fff" stroke="#1560d8" stroke-width="1.1"/></svg><svg style="left:25px;top:2px" width="7" height="15" viewBox="0 0 7 15"><path d="M3.5 1.3 L6.2 6.2 L0.8 6.2 Z M3.5 13.7 L6.2 8.8 L0.8 8.8 Z" fill="#b4b4b4"/></svg></div>
<div class="tool" style="left:423px;top:4px;width:21px;border-radius:0 4.5px 4.5px 0;padding:0;background:linear-gradient(#9e9e9e,#959595)"><svg style="left:1px;top:1px" width="18" height="17" viewBox="0 0 18 17"><g fill="#e8eefc" stroke="#2b56a8" stroke-width="1"><circle cx="3.9" cy="3.9" r="1.6"/><circle cx="9" cy="3.9" r="1.6"/><circle cx="14.1" cy="3.9" r="1.6"/></g><path d="M1.5 11.5 L5.5 7.8 L5.5 10.3 L12.5 10.3 L12.5 7.8 L16.5 11.5 L12.5 15.2 L12.5 12.7 L5.5 12.7 L5.5 15.2 Z" fill="#fff" stroke="#202020" stroke-width=".9" stroke-linejoin="round"/></svg></div>
<div class="menu" style="left:450px;top:4px;width:19px;padding:0;border-radius:4.5px 0 0 4.5px;border-right:none;background:linear-gradient(#5e5e5e,#474747)"><svg style="left:1px;top:1px" width="17" height="17" viewBox="0 0 17 17"><path d="M8.5 10.3 V2" stroke="#10233f" stroke-width="3.4" stroke-linecap="round"/><path d="M8.5 10.3 V2.2" stroke="#4a90f0" stroke-width="2" stroke-linecap="round"/><path d="M8.5 4 V2.2" stroke="#dbe9ff" stroke-width="1.6" stroke-linecap="round"/><path d="M8.5 10.3 L2.2 14.4" stroke="#4a0d06" stroke-width="3.4" stroke-linecap="round"/><path d="M8.5 10.3 L2.3 14.3" stroke="#e8432c" stroke-width="2" stroke-linecap="round"/><path d="M3.3 13.6 L2.3 14.3" stroke="#ffe2dc" stroke-width="1.6" stroke-linecap="round"/><path d="M8.5 10.3 L14.8 14.4" stroke="#143a04" stroke-width="3.4" stroke-linecap="round"/><path d="M8.5 10.3 L14.7 14.3" stroke="#5fd024" stroke-width="2" stroke-linecap="round"/><path d="M13.7 13.6 L14.7 14.3" stroke="#e9ffd9" stroke-width="1.6" stroke-linecap="round"/><circle cx="8.5" cy="10.3" r="1.3" fill="#e8e8d8"/></svg></div>
<div class="menu" style="left:468px;top:4px;width:21px;padding:0;border-radius:0;background:linear-gradient(#5c86c9,#4f79bb)"><svg style="left:2px;top:1px" width="17" height="17" viewBox="0 0 17 17"><path d="M2.5 14.5 L9.5 7.5 L7 5 L15 2.2 L12.2 10.2 L9.8 7.8" fill="none" stroke="#0f1d38" stroke-width="3.2" stroke-linejoin="round" stroke-linecap="round"/><path d="M2.5 14.5 L10.5 6.5" stroke="#8ab6f7" stroke-width="1.8" stroke-linecap="round"/><path d="M7 5 L15 2.2 L12.2 10.2 Z" fill="#7fb0f5" stroke="#0f1d38" stroke-width=".8" stroke-linejoin="round"/></svg></div>
<div class="menu" style="left:488px;top:4px;width:21px;padding:0;border-radius:0;background:linear-gradient(#4e4e4e,#3a3a3a)"><svg style="left:2px;top:1px" width="17" height="17" viewBox="0 0 17 17"><path d="M3 14 A11 11 0 0 1 13.5 3.5" fill="none" stroke="#1c2c48" stroke-width="3.6" stroke-linecap="round"/><path d="M3 14 A11 11 0 0 1 13.5 3.5" fill="none" stroke="#5f83bb" stroke-width="2" stroke-linecap="round"/></svg></div>
<div class="menu" style="left:508px;top:4px;width:21px;padding:0;border-radius:0;background:linear-gradient(#4e4e4e,#3a3a3a)"><svg style="left:2px;top:1px" width="17" height="17" viewBox="0 0 17 17"><path d="M2.5 14.5 L9 8" stroke="#1c2c48" stroke-width="3.6" stroke-linecap="round"/><rect x="8" y="2" width="7" height="7" fill="#5f7fb3" stroke="#1c2c48" stroke-width="1"/><path d="M2.5 14.5 L9 8" stroke="#5f83bb" stroke-width="2" stroke-linecap="round"/></svg></div>
<div class="menu" style="left:528px;top:4px;width:73px;border-radius:0 4.5px 4.5px 0;letter-spacing:-0.5px">Global<svg style="left:62px;top:2px" width="7" height="15" viewBox="0 0 7 15"><path d="M3.5 1.3 L6.2 6.2 L0.8 6.2 Z M3.5 13.7 L6.2 8.8 L0.8 8.8 Z" fill="#b4b4b4"/></svg></div>
<div style="left:606px;top:4px;width:50px;height:20px;border:1px solid #1c1c1c;border-radius:4.5px;background:#222;overflow:hidden;box-shadow:0 1px 0 rgba(255,255,255,.10)"><div style="left:0px;top:0px;width:9px;height:9px;background:#6c6c6c"></div><div style="left:10px;top:0px;width:9px;height:9px;background:#9a9a9a"></div><div style="left:20px;top:0px;width:9px;height:9px;background:#9a9a9a"></div><div style="left:30px;top:0px;width:9px;height:9px;background:#9a9a9a"></div><div style="left:40px;top:0px;width:9px;height:9px;background:#9a9a9a"></div><div style="left:0px;top:10px;width:9px;height:9px;background:#9a9a9a"></div><div style="left:10px;top:10px;width:9px;height:9px;background:#9a9a9a"></div><div style="left:20px;top:10px;width:9px;height:9px;background:#9a9a9a"></div><div style="left:30px;top:10px;width:9px;height:9px;background:#9a9a9a"></div><div style="left:40px;top:10px;width:9px;height:9px;background:#9a9a9a"></div></div>
<svg style="left:607px;top:5px" width="9" height="9" viewBox="0 0 9 9"><circle cx="4.5" cy="4.3" r="2.6" fill="#f79a2e" stroke="#6b3200" stroke-width=".9"/><circle cx="4.5" cy="4.3" r="1" fill="#ffe2b8"/></svg>
<div style="left:661px;top:4px;width:50px;height:20px;border:1px solid #1c1c1c;border-radius:4.5px;background:#222;overflow:hidden;box-shadow:0 1px 0 rgba(255,255,255,.10)"><div style="left:0px;top:0px;width:9px;height:9px;background:#9a9a9a"></div><div style="left:10px;top:0px;width:9px;height:9px;background:#9a9a9a"></div><div style="left:20px;top:0px;width:9px;height:9px;background:#9a9a9a"></div><div style="left:30px;top:0px;width:9px;height:9px;background:#9a9a9a"></div><div style="left:40px;top:0px;width:9px;height:9px;background:#6c6c6c"></div><div style="left:0px;top:10px;width:9px;height:9px;background:#9a9a9a"></div><div style="left:10px;top:10px;width:9px;height:9px;background:#9a9a9a"></div><div style="left:20px;top:10px;width:9px;height:9px;background:#9a9a9a"></div><div style="left:30px;top:10px;width:9px;height:9px;background:#9a9a9a"></div><div style="left:40px;top:10px;width:9px;height:9px;background:#9a9a9a"></div></div>
<svg style="left:702px;top:5px" width="9" height="9" viewBox="0 0 9 9"><circle cx="4.3" cy="4.3" r="2.6" fill="#8c8c8c" stroke="#2a2a2a" stroke-width=".9"/></svg>
<div class="tool" style="left:716px;top:4px;width:20px;padding:0;background:linear-gradient(#727272,#686868)"><svg style="left:1px;top:1px" width="17" height="17" viewBox="0 0 17 17"><defs><linearGradient id="mon" x1="0" y1="0" x2="1" y2="1"><stop offset="0" stop-color="#d8d8d8"/><stop offset="1" stop-color="#8a8a8a"/></linearGradient></defs><rect x="1.5" y="2.5" width="10" height="11" fill="url(#mon)" stroke="#f2f2f2" stroke-width="1"/><rect x="2.5" y="11.4" width="5" height="1" fill="#f2f2f2"/><rect x="10.6" y="4" width="4.6" height="5.2" rx="2.2" fill="none" stroke="#1a1a1a" stroke-width="2.6"/><rect x="10.6" y="8.6" width="4.6" height="5.6" rx="2.2" fill="none" stroke="#1a1a1a" stroke-width="2.6"/><rect x="10.6" y="4" width="4.6" height="5.2" rx="2.2" fill="none" stroke="#f4f4f4" stroke-width="1.2"/><rect x="10.6" y="8.6" width="4.6" height="5.6" rx="2.2" fill="none" stroke="#f4f4f4" stroke-width="1.2"/></svg></div>
<div class="tool" style="left:741px;top:4px;width:20px;padding:0;border-radius:4.5px 0 0 4.5px;border-right:none;background:linear-gradient(#747474,#6a6a6a)"><svg style="left:2px;top:2px" width="15" height="15" viewBox="0 0 15 15"><circle cx="7.5" cy="7.5" r="5.6" fill="#6f9be6" stroke="#1d3a78" stroke-width="1.1"/><circle cx="7.5" cy="7.5" r="3.2" fill="none" stroke="#a9c6f5" stroke-width="1.3"/><circle cx="7.5" cy="7.5" r="1.2" fill="#8db4f0"/></svg></div>
<div class="menu" style="left:760px;top:4px;width:36px;padding:0;border-radius:0 4.5px 4.5px 0"><svg style="left:4px;top:2px" width="15" height="15" viewBox="0 0 15 15"><path d="M2 13 C2.5 1.5 12.5 1.5 13 13" fill="none" stroke="#141414" stroke-width="2.8" stroke-linecap="round"/><path d="M2 13 C2.5 1.5 12.5 1.5 13 13" fill="none" stroke="#fff" stroke-width="1.3" stroke-linecap="round"/></svg><svg style="left:25px;top:2px" width="7" height="15" viewBox="0 0 7 15"><path d="M3.5 1.3 L6.2 6.2 L0.8 6.2 Z M3.5 13.7 L6.2 8.8 L0.8 8.8 Z" fill="#b4b4b4"/></svg></div>
<div class="tool" style="left:801px;top:4px;width:20px;padding:0;border-radius:4.5px 0 0 4.5px;border-right:none;background:linear-gradient(#9e9e9e,#959595)"><svg style="left:1px;top:1px" width="17" height="17" viewBox="0 0 17 17"><path d="M4 6.5 L8.5 3.5 A4.6 4.6 0 0 1 14 10.5 L9.5 14" fill="none" stroke="#3a3a3a" stroke-width="4.2" stroke-linecap="butt"/><path d="M4 6.5 L8.5 3.5 A4.6 4.6 0 0 1 14 10.5 L9.5 14" fill="none" stroke="#a8a8a8" stroke-width="2.6" stroke-linecap="butt"/><path d="M4 6.5 L5.6 5.4 M9.5 14 L11 12.8" stroke="#e6e6e6" stroke-width="2.6"/></svg></div>
<div class="menu" style="left:820px;top:4px;width:36px;padding:0;border-radius:0"><svg style="left:3px;top:2px" width="17" height="15" viewBox="0 0 17 15"><path d="M2 3 V12 M15 3 V12 M2 7.5 H6 M11 7.5 H15 M5 5.5 V9.5 M12 5.5 V9.5" stroke="#d8d8d8" stroke-width="1.1" fill="none"/><rect x="6.8" y="2.6" width="3.2" height="10" rx="1.4" fill="#e9f0ff" stroke="#2f66c8" stroke-width="1.2"/></svg><svg style="left:25px;top:2px" width="7" height="15" viewBox="0 0 7 15"><path d="M3.5 1.3 L6.2 6.2 L0.8 6.2 Z M3.5 13.7 L6.2 8.8 L0.8 8.8 Z" fill="#b4b4b4"/></svg></div>
<div class="tool" style="left:855px;top:4px;width:21px;padding:0;border-radius:0 4.5px 4.5px 0;background:linear-gradient(#9e9e9e,#959595)"><svg style="left:1px;top:1px" width="18" height="17" viewBox="0 0 18 17"><path d="M3 10.5 H17 M3 14.5 H17 M9.5 4 V17 M14.5 2 V17" stroke="#2c2c2c" stroke-width="1"/><path d="M3 9.5 H17 M3 13.5 H17 M8.5 4 V17 M13.5 2 V17" stroke="#f6f6f6" stroke-width="1"/><circle cx="5.8" cy="5" r="3.8" fill="#f4f7ff" stroke="#1a2c55" stroke-width="1"/><circle cx="5.8" cy="5" r="1.7" fill="#fff" stroke="#2a62d0" stroke-width="1.3"/></svg></div>
<div class="tool" style="left:881px;top:4px;width:20px;padding:0;border-radius:4.5px 0 0 4.5px;border-right:none"><svg style="left:1px;top:1px" width="18" height="17" viewBox="0 0 18 17"><rect x="1.5" y="5" width="12.5" height="9" rx="1" fill="#9a9a9a" stroke="#141414" stroke-width="1.1"/><rect x="2.5" y="5.8" width="10.5" height="2.6" fill="#e8e8e8"/><rect x="3" y="3.6" width="3.4" height="1.6" fill="#e0e0e0" stroke="#141414" stroke-width=".6"/><rect x="3.2" y="6.3" width="1.3" height="1.3" fill="#e41010"/><circle cx="9" cy="10.3" r="3.3" fill="#3a2a2a" stroke="#e6e6e6" stroke-width="1"/><circle cx="8.4" cy="9.6" r="1.2" fill="#5a6aa0"/><circle cx="9.8" cy="11" r="1.1" fill="#8a3a2a"/><circle cx="13.8" cy="3.8" r="3.2" fill="#e9c22a"/><path d="M13.8 1.2 V6.4 M11.2 3.8 H16.4" stroke="#fff" stroke-width="1.3"/></svg></div>
<div class="tool" style="left:900px;top:4px;width:21px;padding:0;border-radius:0 4.5px 4.5px 0"><svg style="left:1px;top:1px" width="18" height="17" viewBox="0 0 18 17"><rect x="3" y="9" width="12.5" height="6.5" fill="#6a6a6a" stroke="#111" stroke-width="1.1"/><rect x="3" y="7.6" width="12.5" height="2" fill="#111"/><path d="M4.5 8.6 h2 m2 0 h2 m2 0 h2" stroke="#f2f2f2" stroke-width="1.2"/><path d="M3.2 6.2 L14.6 1.6" stroke="#111" stroke-width="3"/><path d="M5 5.5 l1.9 -.8 m1.9 -.8 l1.9 -.8 m1.9 -.8 l1.5 -.6" stroke="#f2f2f2" stroke-width="1.4"/><rect x="2" y="5.5" width="2" height="4" fill="#6fa0e8" stroke="#1c3a70" stroke-width=".6"/><path d="M8 12.5 h5 M10.5 11 v3" stroke="#8a8a8a" stroke-width=".9"/></svg></div>
<div style="left:1825px;top:22px;width:14px;height:10px;border-radius:5px;background:#555"></div>
</div>

<!-- ===== RIGHT COLUMN ===== -->
<div class="hline" style="left:1840px;top:27px;width:1px;height:974px;background:#0a0a0a"></div>
<div class="hline" style="left:1841px;top:27px;width:1px;height:974px;background:#828282"></div>
<div id="right" style="left:1842px;top:28px;width:78px;height:973px;background:#727272;overflow:hidden">
<!--RIGHT-->
<div style="left:0;top:17px;width:62px;height:20px;background:#6f6f6f"></div>
<div style="left:0;top:37px;width:62px;height:20px;background:#737373"></div>
<div style="left:0;top:57px;width:62px;height:20px;background:#6f6f6f"></div>
<div style="left:0;top:77px;width:62px;height:20px;background:#737373"></div>
<div style="left:0;top:97px;width:62px;height:20px;background:#6f6f6f"></div>
<div style="left:0;top:117px;width:62px;height:20px;background:#737373"></div>
<div style="left:0;top:137px;width:62px;height:20px;background:#6f6f6f"></div>
<div style="left:1px;top:24px;width:1px;height:140px;background:#686868"></div>
<div style="left:22px;top:24px;width:1px;height:140px;background:#686868"></div>
<div style="left:41px;top:24px;width:1px;height:140px;background:#686868"></div>
<svg style="left:4px;top:22px" width="16" height="10" viewBox="0 0 16 10"><defs><linearGradient id="eo" x1="0" y1="0" x2="0" y2="1"><stop offset="0" stop-color="#8a8a8a" stop-opacity="0"/><stop offset="1" stop-color="#9a9a9a"/></linearGradient></defs><path d="M0.8 3.2 C4 8.8 12 8.8 15.2 3.2 C11 4.4 5 4.4 0.8 3.2Z" fill="url(#eo)"/><path d="M0.8 3.4 C4 9 12 9 15.2 3.4" fill="none" stroke="#585858" stroke-width="1"/></svg>
<svg style="left:28px;top:20px" width="10" height="15" viewBox="0 0 10 15"><path d="M0.9 0.9 L0.9 11 L3.3 8.8 L5.6 13.9 L7.5 13 L5.3 8.1 L8.7 8 Z" fill="#fff" stroke="#111" stroke-width="1.2" stroke-linejoin="round"/></svg>
<svg style="left:44px;top:21px" width="14" height="13" viewBox="0 0 14 13"><rect x="0.8" y="2.4" width="12.4" height="9.6" rx="1.2" fill="#e9e9e9" stroke="#111" stroke-width="1.3"/><rect x="2" y="0.7" width="3" height="2" fill="#f2f2f2" stroke="#111" stroke-width=".6"/><rect x="1.7" y="5" width="2.3" height="5.6" fill="#2a2a2a"/><rect x="10.6" y="4.6" width="1.8" height="6" fill="#2a2a2a"/><rect x="9.6" y="3" width="2.2" height="1" fill="#1b2b55"/><circle cx="7.3" cy="7.6" r="3.2" fill="#d9d9d9"/><circle cx="7.4" cy="7.8" r="2.3" fill="#6a3a32"/><path d="M5.3 7.4 A2.2 2.2 0 0 1 8.3 5.7 L7.3 7.8Z" fill="#3f5f9c"/><rect x="2.5" y="3.9" width="1.4" height="1.4" fill="#f01515"/></svg>
<svg style="left:4px;top:42px" width="16" height="10" viewBox="0 0 16 10"><path d="M0.8 3.2 C4 8.8 12 8.8 15.2 3.2 C11 4.4 5 4.4 0.8 3.2Z" fill="url(#eo)"/><path d="M0.8 3.4 C4 9 12 9 15.2 3.4" fill="none" stroke="#585858" stroke-width="1"/></svg>
<svg style="left:28px;top:40px" width="10" height="15" viewBox="0 0 10 15"><path d="M0.9 0.9 L0.9 11 L3.3 8.8 L5.6 13.9 L7.5 13 L5.3 8.1 L8.7 8 Z" fill="#fff" stroke="#111" stroke-width="1.2" stroke-linejoin="round"/></svg>
<svg style="left:44px;top:41px" width="14" height="13" viewBox="0 0 14 13"><rect x="0.8" y="2.4" width="12.4" height="9.6" rx="1.2" fill="#e9e9e9" stroke="#111" stroke-width="1.3"/><rect x="2" y="0.7" width="3" height="2" fill="#f2f2f2" stroke="#111" stroke-width=".6"/><rect x="1.7" y="5" width="2.3" height="5.6" fill="#2a2a2a"/><rect x="10.6" y="4.6" width="1.8" height="6" fill="#2a2a2a"/><rect x="9.6" y="3" width="2.2" height="1" fill="#1b2b55"/><circle cx="7.3" cy="7.6" r="3.2" fill="#d9d9d9"/><circle cx="7.4" cy="7.8" r="2.3" fill="#6a3a32"/><path d="M5.3 7.4 A2.2 2.2 0 0 1 8.3 5.7 L7.3 7.8Z" fill="#3f5f9c"/><rect x="2.5" y="3.9" width="1.4" height="1.4" fill="#f01515"/></svg>
<svg style="left:4px;top:62px" width="16" height="10" viewBox="0 0 16 10"><path d="M0.8 3.2 C4 8.8 12 8.8 15.2 3.2 C11 4.4 5 4.4 0.8 3.2Z" fill="url(#eo)"/><path d="M0.8 3.4 C4 9 12 9 15.2 3.4" fill="none" stroke="#585858" stroke-width="1"/></svg>
<svg style="left:28px;top:60px" width="10" height="15" viewBox="0 0 10 15"><path d="M0.9 0.9 L0.9 11 L3.3 8.8 L5.6 13.9 L7.5 13 L5.3 8.1 L8.7 8 Z" fill="#fff" stroke="#111" stroke-width="1.2" stroke-linejoin="round"/></svg>
<svg style="left:44px;top:61px" width="14" height="13" viewBox="0 0 14 13"><rect x="0.8" y="2.4" width="12.4" height="9.6" rx="1.2" fill="#e9e9e9" stroke="#111" stroke-width="1.3"/><rect x="2" y="0.7" width="3" height="2" fill="#f2f2f2" stroke="#111" stroke-width=".6"/><rect x="1.7" y="5" width="2.3" height="5.6" fill="#2a2a2a"/><rect x="10.6" y="4.6" width="1.8" height="6" fill="#2a2a2a"/><rect x="9.6" y="3" width="2.2" height="1" fill="#1b2b55"/><circle cx="7.3" cy="7.6" r="3.2" fill="#d9d9d9"/><circle cx="7.4" cy="7.8" r="2.3" fill="#6a3a32"/><path d="M5.3 7.4 A2.2 2.2 0 0 1 8.3 5.7 L7.3 7.8Z" fill="#3f5f9c"/><rect x="2.5" y="3.9" width="1.4" height="1.4" fill="#f01515"/></svg>
<svg style="left:4px;top:82px" width="16" height="10" viewBox="0 0 16 10"><path d="M0.8 3.2 C4 8.8 12 8.8 15.2 3.2 C11 4.4 5 4.4 0.8 3.2Z" fill="url(#eo)"/><path d="M0.8 3.4 C4 9 12 9 15.2 3.4" fill="none" stroke="#585858" stroke-width="1"/></svg>
<svg style="left:28px;top:80px" width="10" height="15" viewBox="0 0 10 15"><path d="M0.9 0.9 L0.9 11 L3.3 8.8 L5.6 13.9 L7.5 13 L5.3 8.1 L8.7 8 Z" fill="#fff" stroke="#111" stroke-width="1.2" stroke-linejoin="round"/></svg>
<svg style="left:44px;top:81px" width="14" height="13" viewBox="0 0 14 13"><rect x="0.8" y="2.4" width="12.4" height="9.6" rx="1.2" fill="#e9e9e9" stroke="#111" stroke-width="1.3"/><rect x="2" y="0.7" width="3" height="2" fill="#f2f2f2" stroke="#111" stroke-width=".6"/><rect x="1.7" y="5" width="2.3" height="5.6" fill="#2a2a2a"/><rect x="10.6" y="4.6" width="1.8" height="6" fill="#2a2a2a"/><rect x="9.6" y="3" width="2.2" height="1" fill="#1b2b55"/><circle cx="7.3" cy="7.6" r="3.2" fill="#d9d9d9"/><circle cx="7.4" cy="7.8" r="2.3" fill="#6a3a32"/><path d="M5.3 7.4 A2.2 2.2 0 0 1 8.3 5.7 L7.3 7.8Z" fill="#3f5f9c"/><rect x="2.5" y="3.9" width="1.4" height="1.4" fill="#f01515"/></svg>
<svg style="left:4px;top:102px" width="16" height="10" viewBox="0 0 16 10"><path d="M0.8 5 C4 0.6 12 0.6 15.2 5 C12 9.4 4 9.4 0.8 5 Z" fill="#fff" stroke="#1a1a1a" stroke-width="1.1"/><circle cx="8" cy="4.6" r="2.9" fill="#9c9c9c"/><circle cx="8" cy="4.3" r="1.5" fill="#111"/><circle cx="8.8" cy="3.6" r=".6" fill="#ddd"/></svg>
<svg style="left:28px;top:100px" width="10" height="15" viewBox="0 0 10 15"><path d="M0.9 0.9 L0.9 11 L3.3 8.8 L5.6 13.9 L7.5 13 L5.3 8.1 L8.7 8 Z" fill="#fff" stroke="#111" stroke-width="1.2" stroke-linejoin="round"/></svg>
<svg style="left:44px;top:101px" width="14" height="13" viewBox="0 0 14 13"><rect x="0.8" y="2.4" width="12.4" height="9.6" rx="1.2" fill="#e9e9e9" stroke="#111" stroke-width="1.3"/><rect x="2" y="0.7" width="3" height="2" fill="#f2f2f2" stroke="#111" stroke-width=".6"/><rect x="1.7" y="5" width="2.3" height="5.6" fill="#2a2a2a"/><rect x="10.6" y="4.6" width="1.8" height="6" fill="#2a2a2a"/><rect x="9.6" y="3" width="2.2" height="1" fill="#1b2b55"/><circle cx="7.3" cy="7.6" r="3.2" fill="#d9d9d9"/><circle cx="7.4" cy="7.8" r="2.3" fill="#6a3a32"/><path d="M5.3 7.4 A2.2 2.2 0 0 1 8.3 5.7 L7.3 7.8Z" fill="#3f5f9c"/><rect x="2.5" y="3.9" width="1.4" height="1.4" fill="#f01515"/></svg>
<svg style="left:4px;top:122px" width="16" height="10" viewBox="0 0 16 10"><path d="M0.8 5 C4 0.6 12 0.6 15.2 5 C12 9.4 4 9.4 0.8 5 Z" fill="#fff" stroke="#1a1a1a" stroke-width="1.1"/><circle cx="8" cy="4.6" r="2.9" fill="#9c9c9c"/><circle cx="8" cy="4.3" r="1.5" fill="#111"/><circle cx="8.8" cy="3.6" r=".6" fill="#ddd"/></svg>
<svg style="left:28px;top:120px" width="10" height="15" viewBox="0 0 10 15"><path d="M0.9 0.9 L0.9 11 L3.3 8.8 L5.6 13.9 L7.5 13 L5.3 8.1 L8.7 8 Z" fill="#fff" stroke="#111" stroke-width="1.2" stroke-linejoin="round"/></svg>
<svg style="left:44px;top:121px" width="14" height="13" viewBox="0 0 14 13"><rect x="0.8" y="2.4" width="12.4" height="9.6" rx="1.2" fill="#e9e9e9" stroke="#111" stroke-width="1.3"/><rect x="2" y="0.7" width="3" height="2" fill="#f2f2f2" stroke="#111" stroke-width=".6"/><rect x="1.7" y="5" width="2.3" height="5.6" fill="#2a2a2a"/><rect x="10.6" y="4.6" width="1.8" height="6" fill="#2a2a2a"/><rect x="9.6" y="3" width="2.2" height="1" fill="#1b2b55"/><circle cx="7.3" cy="7.6" r="3.2" fill="#d9d9d9"/><circle cx="7.4" cy="7.8" r="2.3" fill="#6a3a32"/><path d="M5.3 7.4 A2.2 2.2 0 0 1 8.3 5.7 L7.3 7.8Z" fill="#3f5f9c"/><rect x="2.5" y="3.9" width="1.4" height="1.4" fill="#f01515"/></svg>
<svg style="left:4px;top:142px" width="16" height="10" viewBox="0 0 16 10"><path d="M0.8 5 C4 0.6 12 0.6 15.2 5 C12 9.4 4 9.4 0.8 5 Z" fill="#fff" stroke="#1a1a1a" stroke-width="1.1"/><circle cx="8" cy="4.6" r="2.9" fill="#9c9c9c"/><circle cx="8" cy="4.3" r="1.5" fill="#111"/><circle cx="8.8" cy="3.6" r=".6" fill="#ddd"/></svg>
<svg style="left:28px;top:140px" width="10" height="15" viewBox="0 0 10 15"><path d="M0.9 0.9 L0.9 11 L3.3 8.8 L5.6 13.9 L7.5 13 L5.3 8.1 L8.7 8 Z" fill="#fff" stroke="#111" stroke-width="1.2" stroke-linejoin="round"/></svg>
<svg style="left:44px;top:141px" width="14" height="13" viewBox="0 0 14 13"><rect x="0.8" y="2.4" width="12.4" height="9.6" rx="1.2" fill="#e9e9e9" stroke="#111" stroke-width="1.3"/><rect x="2" y="0.7" width="3" height="2" fill="#f2f2f2" stroke="#111" stroke-width=".6"/><rect x="1.7" y="5" width="2.3" height="5.6" fill="#2a2a2a"/><rect x="10.6" y="4.6" width="1.8" height="6" fill="#2a2a2a"/><rect x="9.6" y="3" width="2.2" height="1" fill="#1b2b55"/><circle cx="7.3" cy="7.6" r="3.2" fill="#d9d9d9"/><circle cx="7.4" cy="7.8" r="2.3" fill="#6a3a32"/><path d="M5.3 7.4 A2.2 2.2 0 0 1 8.3 5.7 L7.3 7.8Z" fill="#3f5f9c"/><rect x="2.5" y="3.9" width="1.4" height="1.4" fill="#f01515"/></svg>
<span style="left:62px;top:142px;line-height:13px;font-size:10px;letter-spacing:-0.6px">barstow_body</span>
<div style="left:61px;top:29px;width:13px;height:112px;border-radius:6.5px;background:linear-gradient(90deg,#646464,#5a5a5a);border:1px solid #595959"></div>
<div style="left:61px;top:56px;width:13px;height:13px;border-radius:6.5px;background:linear-gradient(90deg,#929292,#7c7c7c);border:1px solid #505050"></div>
<div style="left:0;top:145px;width:62px;height:18px;background:#727272"></div>
<div style="left:3px;top:146px;width:53px;height:13px;border-radius:6.5px;background:linear-gradient(#5a5a5a,#646464);border:1px solid #595959"></div>
<div style="left:3px;top:146px;width:13px;height:13px;border-radius:6.5px;background:linear-gradient(#929292,#7c7c7c);border:1px solid #505050"></div>
<svg style="left:0px;top:150px" width="13" height="13" viewBox="0 0 13 13"><g stroke="#2e2e2e" stroke-width="1"><path d="M-1 3.5 L10 14.5 M-1 7.5 L6 14.5 M-1 -0.5 L14 14.5"/></g><g stroke="#a8a8a8" stroke-width="1"><path d="M-1 2.3 L11 14.3 M-1 6.3 L7 14.3 M-1 10.3 L3 14.3"/></g></svg>
<div style="left:0;top:0;width:78px;height:25px;background:#6d6d6d"></div>
<div style="left:0;top:0;width:78px;height:1px;background:#7c7c7c"></div>
<div class="menu" style="left:8px;top:2px;width:30px;padding:0"><svg style="left:3px;top:1px" width="17" height="17" viewBox="0 0 17 17"><path d="M3.5 4.5 V14 M3.5 8.7 H7 M3.5 14 H7" stroke="#8aa4d6" stroke-width="1" fill="none"/><rect x="0.6" y="1" width="7" height="3.2" rx=".6" fill="#f39a1e" stroke="#7a4300" stroke-width=".7"/><rect x="1.6" y="2" width="5" height="1.2" fill="#ffe9c4"/><rect x="7.4" y="7" width="7" height="3.2" rx=".6" fill="#2c2c2c"/><rect x="8.2" y="7.8" width="5.4" height="1.5" fill="#f5f5f5"/><rect x="7.4" y="12.4" width="7" height="3.2" rx=".6" fill="#2c2c2c"/><rect x="8.2" y="13.2" width="5.4" height="1.5" fill="#f5f5f5"/></svg><svg style="left:20px;top:2px" width="7" height="15" viewBox="0 0 7 15"><path d="M3.5 1.3 L6.2 6.2 L0.8 6.2 Z M3.5 13.7 L6.2 8.8 L0.8 8.8 Z" fill="#b4b4b4"/></svg></div>
<span class="hdr-txt" style="left:50px;top:7px">View</span>
<svg style="left:65px;top:0px" width="13" height="13" viewBox="0 0 13 13"><g stroke="#2e2e2e" stroke-width="1"><path d="M2 -1 L14 11 M6 -1 L14 7 M10 -1 L14 3"/></g><g stroke="#a8a8a8" stroke-width="1"><path d="M3.2 -1 L14 9.8 M7.2 -1 L14 5.8 M11.2 -1 L14 1.8"/></g></svg>
<div style="left:0;top:163px;width:78px;height:1px;background:#0a0a0a"></div>
<div style="left:0;top:164px;width:78px;height:25px;background:#6d6d6d"></div>
<div style="left:0;top:164px;width:78px;height:1px;background:#7c7c7c"></div>
<div style="left:0;top:189px;width:78px;height:1px;background:#808080"></div>
<div class="menu" style="left:8px;top:167px;width:30px;padding:0"><svg style="left:3px;top:1px" width="16" height="17" viewBox="0 0 16 17"><rect x="1" y="2.4" width="13.6" height="4.8" rx="2.3" fill="#555" stroke="#e8e8e8" stroke-width="1"/><rect x="9" y="3.2" width="5" height="3.2" rx="1.4" fill="#eee"/><rect x="1" y="9.8" width="13.6" height="5" rx="2.4" fill="#eaeaea" stroke="#fff" stroke-width="1"/><path d="M3.8 10.8 L2 12.3 L3.8 13.8 Z M11.8 10.8 L13.6 12.3 L11.8 13.8 Z" fill="#1a1a1a"/></svg><svg style="left:20px;top:2px" width="7" height="15" viewBox="0 0 7 15"><path d="M3.5 1.3 L6.2 6.2 L0.8 6.2 Z M3.5 13.7 L6.2 8.8 L0.8 8.8 Z" fill="#b4b4b4"/></svg></div>
<div class="tool" style="left:46px;top:167px;width:21px;padding:0;border-radius:4.5px 0 0 4.5px;background:linear-gradient(#6e6e6e,#646464)"><svg style="left:2px;top:2px" width="15" height="14" viewBox="0 0 15 14"><rect x="0.8" y="2.8" width="13.4" height="10" rx="1" fill="#8c8c8c" stroke="#1a1a1a" stroke-width="1"/><rect x="1.6" y="3.6" width="11.8" height="2.4" fill="#b9b9b9"/><rect x="2.4" y="1.2" width="3.4" height="1.8" fill="#bdbdbd" stroke="#1a1a1a" stroke-width=".5"/><rect x="4.3" y="4.2" width="1.2" height="1.2" fill="#e01212"/><circle cx="8.6" cy="8.8" r="3.2" fill="#4a3a3a" stroke="#a5a5a5" stroke-width="1"/><circle cx="8.2" cy="8.2" r="1.2" fill="#62688a"/></svg></div>
<div class="tool" style="left:66px;top:167px;width:21px;padding:0;border-radius:0;border-left:none;background:linear-gradient(#a0a0a0,#8c8c8c)"><svg style="left:1px;top:1px" width="12" height="16" viewBox="0 0 12 16"><rect x="0.5" y="1" width="11" height="10" fill="#d5d5c8" stroke="#8a8a80" stroke-width=".8"/><rect x="1.6" y="2" width="1.8" height="1.8" fill="#e8d84a"/><path d="M3 9 L8 3.5 L10 9 Z" fill="#4a78c8" stroke="#1c3260" stroke-width=".8"/><circle cx="5" cy="9" r="1.6" fill="#ddd" stroke="#333" stroke-width=".6"/><ellipse cx="7" cy="13.6" rx="5" ry="1.5" fill="#4a4a3a"/></svg></div>
<svg style="left:65px;top:164px" width="13" height="13" viewBox="0 0 13 13"><g stroke="#2e2e2e" stroke-width="1"><path d="M2 -1 L14 11 M6 -1 L14 7 M10 -1 L14 3"/></g><g stroke="#a8a8a8" stroke-width="1"><path d="M3.2 -1 L14 9.8 M7.2 -1 L14 5.8 M11.2 -1 L14 1.8"/></g></svg>
<svg style="left:4px;top:199px" width="17" height="17" viewBox="0 0 17 17"><path d="M1.2 15.8 L6.4 10.2" stroke="#1a1a1a" stroke-width="2.4" stroke-linecap="round"/><path d="M1.4 15.6 L6.4 10.2" stroke="#e6e6e6" stroke-width="1.1" stroke-linecap="round"/><path d="M4.2 7 L10 12.8 L11.2 10.6 L14.4 7.8 L15.8 6.2 L10.8 1.2 L9.2 2.6 L6.4 5.8 Z" fill="#dcdcdc" stroke="#1a1a1a" stroke-width="1" stroke-linejoin="round"/><path d="M7 6.2 L10 3 L11.6 4.4 L8.6 7.6Z" fill="#fff"/><path d="M9.6 11.2 L14 7.4" stroke="#8a8a8a" stroke-width="1.2"/></svg>
<svg style="left:23px;top:199px" width="18" height="16" viewBox="0 0 18 16"><rect x="0.5" y="1.5" width="3.4" height="3.4" fill="#f5f5a8" stroke="#8f8f3a" stroke-width=".8"/><path d="M8.5 2.5 L8.5 11 A3 1.6 0 0 0 14.5 11 L14.5 2.5 Z" fill="#3f78c8" stroke="#1b2f55" stroke-width=".8"/><ellipse cx="11.5" cy="2.6" rx="3" ry="1.5" fill="#b7d0f3" stroke="#1b2f55" stroke-width=".7"/><rect x="9.6" y="4" width="1.6" height="7.4" fill="#9cc0f0" opacity=".8"/><circle cx="6.2" cy="11" r="3.9" fill="#e8e8e8" stroke="#1a1a1a" stroke-width=".9"/><circle cx="5.2" cy="9.8" r="1.8" fill="#fff"/><path d="M3.2 13.2 A3.9 3.9 0 0 0 9.8 12.2 A5 5 0 0 1 3.2 13.2Z" fill="#8a8a8a"/><path d="M15.2 5.6 L17.6 8 L15.2 10.4 Z" fill="#4a4a4a"/></svg>
<svg style="left:47px;top:200px" width="15" height="15" viewBox="0 0 15 15"><path d="M7.5 0.6 L14 3 L14 10.8 L7.5 14.4 L1 10.8 L1 3 Z" fill="#8a4a08"/><path d="M2 3.3 L7.5 1.6 L13 3.3 L7.5 5.6 Z" fill="#fbd9ad"/><path d="M2 4 L7.2 6.2 L7.2 13.2 L2 10.2 Z" fill="#f2a04a"/><path d="M13 4 L7.8 6.2 L7.8 13.2 L13 10.2 Z" fill="#c8701c"/><path d="M2 3.6 L7.5 5.9 L13 3.6 M7.5 5.9 L7.5 13.3" stroke="#ffe9cf" stroke-width=".8" fill="none"/></svg>
<div class="menu" style="left:7px;top:234px;width:63px;letter-spacing:-0.55px;padding-left:6px">Add Mod<svg style="left:52px;top:2px" width="7" height="15" viewBox="0 0 7 15"><path d="M3.5 1.3 L6.2 6.2 L0.8 6.2 Z M3.5 13.7 L6.2 8.8 L0.8 8.8 Z" fill="#b4b4b4"/></svg></div>
<svg style="left:0px;top:960px" width="13" height="13" viewBox="0 0 13 13"><g stroke="#2e2e2e" stroke-width="1"><path d="M-1 3.5 L10 14.5 M-1 7.5 L6 14.5 M-1 -0.5 L14 14.5"/></g><g stroke="#a8a8a8" stroke-width="1"><path d="M-1 2.3 L11 14.3 M-1 6.3 L7 14.3 M-1 10.3 L3 14.3"/></g></svg>
</div>
</body>
</html>
